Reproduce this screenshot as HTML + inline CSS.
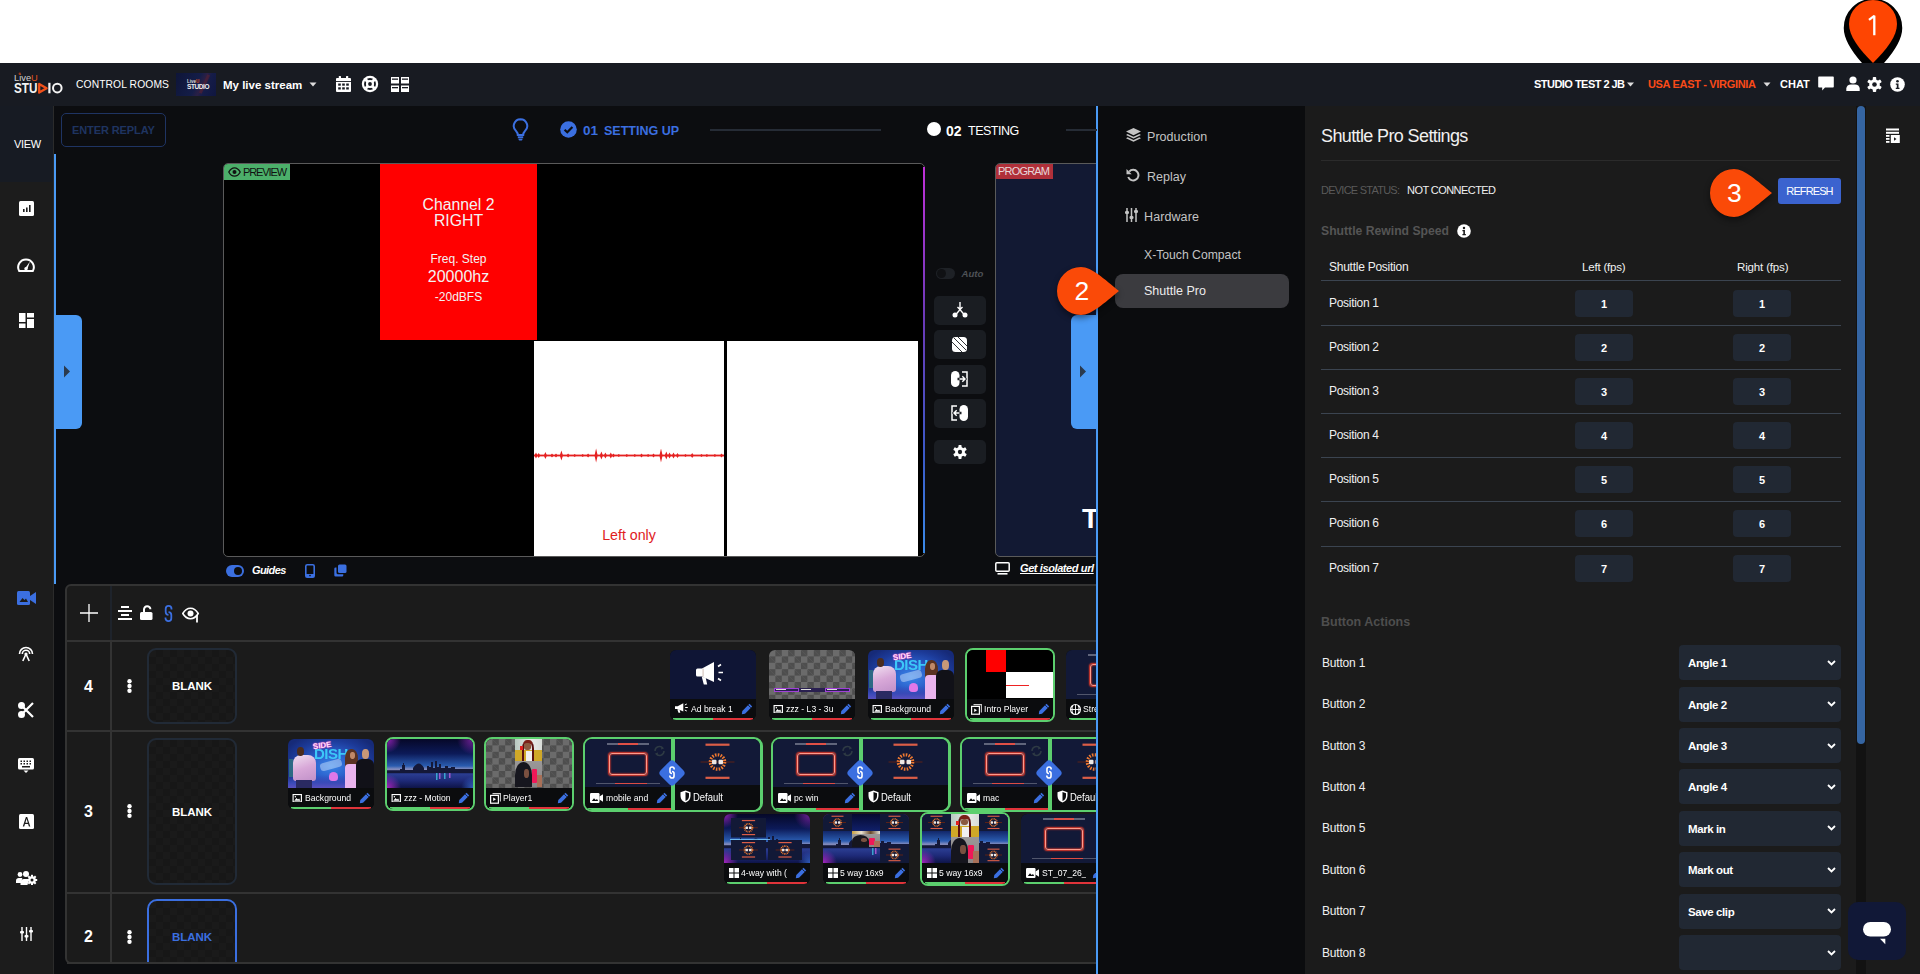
<!DOCTYPE html>
<html><head><meta charset="utf-8">
<style>
*{margin:0;padding:0;box-sizing:border-box}
html,body{width:1920px;height:974px;overflow:hidden;background:#fff;font-family:"Liberation Sans",sans-serif}
.a{position:absolute}
.t{position:absolute;white-space:nowrap;line-height:1}
#topbar{left:0;top:63px;width:1920px;height:43px;background:#181b22}
#side{left:0;top:106px;width:54px;height:868px;background:#1c1c1c;border-right:1px solid #2b2b2b}
#sideview{left:0;top:106px;width:53px;height:76px;background:#171b23}
#main{left:54px;top:106px;width:1043px;height:868px;background:#0c0d10}
#bluel{left:54px;top:154px;width:2px;height:430px;background:#4a9af5}
#bluer{left:1096px;top:106px;width:2px;height:868px;background:#4a9af5}
#snav{left:1098px;top:106px;width:207px;height:868px;background:#0b0c0e}
#scont{left:1305px;top:106px;width:615px;height:868px;background:#1b1b1b}
#tl{left:65px;top:584px;width:1100px;height:380px;background:#1b1b1b;border:2px solid #333;border-radius:6px}
</style></head><body>
<div id="topbar" class="a"></div>
<div id="side" class="a"></div>
<div id="sideview" class="a"></div>
<div id="main" class="a"></div>
<div id="tl" class="a"></div>

<div class="a" style="left:0;top:0;width:1096px;height:962px;overflow:hidden">
<!-- TIMELINE STRUCTURE -->
<div class="a" style="left:67px;top:640px;width:1040px;height:2px;background:#333"></div>
<div class="a" style="left:67px;top:730px;width:1040px;height:2px;background:#333"></div>
<div class="a" style="left:67px;top:892px;width:1040px;height:2px;background:#333"></div>
<div class="a" style="left:110px;top:586px;width:2px;height:54px;background:#1e232b"></div>
<div class="a" style="left:110px;top:642px;width:2px;height:320px;background:#333"></div>
<svg class="a" style="left:80px;top:604px" width="18" height="18" viewBox="0 0 18 18"><path d="M9 0V18M0 9H18" stroke="#fff" stroke-width="1.3"/></svg>
<svg class="a" style="left:118px;top:606px" width="14" height="14" viewBox="0 0 14 14"><g fill="#fff"><rect x="3" y="0" width="8" height="2"/><rect x="0" y="4" width="14" height="2"/><rect x="3" y="8" width="8" height="2"/><rect x="0" y="12" width="14" height="2"/></g></svg>
<svg class="a" style="left:140px;top:605px" width="15" height="15" viewBox="0 0 15 15"><path d="M4 7V4.5A3.2 3.2 0 0 1 10.4 4.3" fill="none" stroke="#fff" stroke-width="2"/><rect x="0" y="7" width="12.5" height="8" rx="1.5" fill="#fff"/></svg>
<svg class="a" style="left:163px;top:605px" width="11" height="17" viewBox="0 0 11 17"><g fill="none" stroke="#3b6fe0" stroke-width="1.8"><path d="M8.5 4.5V3.8A2.9 2.9 0 0 0 2.7 3.8V7A2.9 2.9 0 0 0 5.5 9.8"/><path d="M2.5 12.5V13.2A2.9 2.9 0 0 0 8.3 13.2V10A2.9 2.9 0 0 0 5.5 7.2"/></g></svg>
<svg class="a" style="left:182px;top:607px" width="18" height="16" viewBox="0 0 18 16"><path d="M0.8 6.5C2.8 3 5.5 1.3 8.5 1.3S14.2 3 16.2 6.5C14.2 10 11.5 11.7 8.5 11.7S2.8 10 0.8 6.5z" fill="none" stroke="#fff" stroke-width="1.6"/><circle cx="8.5" cy="6.5" r="3" fill="#fff"/><path d="M15 8V15.5" stroke="#fff" stroke-width="1.8"/></svg>
<div class="t" style="left:84px;top:678.5px;font-size:16px;font-weight:bold;color:#fff">4</div>
<div class="t" style="left:84px;top:804px;font-size:16px;font-weight:bold;color:#fff">3</div>
<div class="t" style="left:84px;top:928.8px;font-size:16px;font-weight:bold;color:#fff">2</div>
<svg class="a" style="left:126px;top:678px" width="7" height="16" viewBox="0 0 7 16"><g fill="#fff"><circle cx="3.5" cy="3.3" r="2.2"/><circle cx="3.5" cy="8" r="2.2"/><circle cx="3.5" cy="12.7" r="2.2"/></g></svg>
<svg class="a" style="left:126px;top:803px" width="7" height="16" viewBox="0 0 7 16"><g fill="#fff"><circle cx="3.5" cy="3.3" r="2.2"/><circle cx="3.5" cy="8" r="2.2"/><circle cx="3.5" cy="12.7" r="2.2"/></g></svg>
<svg class="a" style="left:126px;top:929px" width="7" height="16" viewBox="0 0 7 16"><g fill="#fff"><circle cx="3.5" cy="3.3" r="2.2"/><circle cx="3.5" cy="8" r="2.2"/><circle cx="3.5" cy="12.7" r="2.2"/></g></svg>

<div class="a" style="left:147px;top:648px;width:90px;height:76px;border:2px solid #212a36;border-radius:9px;background-color:#1a1a1a;background-image:linear-gradient(45deg,#171717 25%,transparent 25%,transparent 75%,#171717 75%),linear-gradient(45deg,#171717 25%,transparent 25%,transparent 75%,#171717 75%);background-size:14px 14px;background-position:0 0,7px 7px"></div>
<div class="t" style="left:147px;top:680.8px;width:90px;text-align:center;font-size:11.5px;font-weight:bold;color:#fff">BLANK</div>
<div class="a" style="left:147px;top:738px;width:90px;height:147px;border:2px solid #212a36;border-radius:9px;background-color:#1a1a1a;background-image:linear-gradient(45deg,#171717 25%,transparent 25%,transparent 75%,#171717 75%),linear-gradient(45deg,#171717 25%,transparent 25%,transparent 75%,#171717 75%);background-size:14px 14px;background-position:0 0,7px 7px"></div>
<div class="t" style="left:147px;top:806.8px;width:90px;text-align:center;font-size:11.5px;font-weight:bold;color:#fff">BLANK</div>
<div class="a" style="left:147px;top:899px;width:90px;height:80px;border:2px solid #3b6fe0;border-radius:10px;background-color:#1a1a1a;background-image:linear-gradient(45deg,#171717 25%,transparent 25%,transparent 75%,#171717 75%),linear-gradient(45deg,#171717 25%,transparent 25%,transparent 75%,#171717 75%);background-size:14px 14px;background-position:0 0,7px 7px"></div>
<div class="t" style="left:147px;top:931.5px;width:90px;text-align:center;font-size:11.5px;font-weight:bold;color:#3b6fe0">BLANK</div>
<!-- CARDS -->
<div class="a" style="left:670px;top:650px;width:86px;height:70px"><div class="a" style="left:0;top:0;width:86px;height:70px;border-radius:6px;overflow:hidden;background:#0b0c0e"><div class="a" style="left:0;top:0;width:86px;height:49px;background:#0f1535"></div><svg class="a" style="left:26px;top:11.5px" width="31" height="23" viewBox="0 0 31 23"><path d="M0 8Q0 6.5 1.5 6.5H6L18 0V20L6 14.5H1.5Q0 14.5 0 13z" fill="#fff"/><rect x="6.5" y="6.5" width="1.2" height="8" fill="#d8c8c0"/><path d="M5.8 15L7.8 22.5H11.2L9.6 15.3z" fill="#fff"/><path d="M22 4.5L25 2.5M22.5 10.5H27M22 16.5L25 18.5" stroke="#fff" stroke-width="1.6"/></svg><div class="a" style="left:0;top:49px;width:86px;height:21px;background:#0b0c0e"><svg class="a" style="left:5px;top:4px" width="13" height="10" viewBox="0 0 13 10"><path d="M0 3.2H2.6L8.3 0.3V8.6L2.6 6H0z" fill="#fff"/><path d="M2.3 6.2L3.5 9.8H5.3L4.5 6.3z" fill="#fff"/><path d="M9.8 2L11.8 1M10.2 4.5H12.8M9.8 7L11.8 8" stroke="#fff" stroke-width="1"/></svg><div class="a" style="left:21px;top:4.3px;width:43.5px;height:13px;overflow:hidden"><div class="t" style="left:0;top:0;font-size:9.8px;color:#fff;letter-spacing:0px;line-height:12px;transform:scaleX(0.88);transform-origin:left">Ad break 1</div></div><svg class="a" style="left:71px;top:3.5px" width="12" height="12" viewBox="0 0 12 12"><path d="M8.5 0.8L11.2 3.5L4 10.7L0.8 11.2L1.3 8z" fill="#3b6fe0"/><path d="M7.2 2.1L9.9 4.8" stroke="#0b0c0e" stroke-width="0.8"/></svg></div><div class="a" style="left:3px;top:68px;width:40.0px;height:2px;background:#5ccf6e"></div><div class="a" style="left:43.0px;top:68px;width:40.0px;height:2px;background:#e0343a"></div></div></div>
<div class="a" style="left:769px;top:650px;width:86px;height:70px"><div class="a" style="left:0;top:0;width:86px;height:70px;border-radius:6px;overflow:hidden;background:#0b0c0e"><div class="a" style="left:0;top:0;width:86px;height:49px;background-color:#6b6b6b;background-image:linear-gradient(45deg,#4e4e4e 25%,transparent 25%,transparent 75%,#4e4e4e 75%),linear-gradient(45deg,#4e4e4e 25%,transparent 25%,transparent 75%,#4e4e4e 75%);background-size:12.8px 12.8px;background-position:0 0,6.4px 6.4px;"></div><div class="a" style="left:5px;top:38px;width:25px;height:4px;border:1px solid #a040d8;background:#2a2050"></div><div class="a" style="left:30px;top:38px;width:26px;height:4px;background:#2a2050"></div><div class="a" style="left:56px;top:38px;width:25px;height:4px;border:1px solid #a040d8;background:#2a2050"></div><div class="a" style="left:7px;top:39px;width:10px;height:1.2px;background:#ddd"></div><div class="a" style="left:32px;top:39px;width:10px;height:1.2px;background:#ddd"></div><div class="a" style="left:58px;top:39px;width:10px;height:1.2px;background:#ddd"></div><div class="a" style="left:0;top:49px;width:86px;height:21px;background:#0b0c0e"><svg class="a" style="left:4px;top:5.5px" width="10.5" height="8.5" viewBox="0 0 10 9"><rect x="0.6" y="0.6" width="8.8" height="7.8" fill="none" stroke="#fff" stroke-width="1.2"/><path d="M1.8 7.2L4.2 4.3L5.8 5.8L7 4.8L8.3 7.2z" fill="#fff"/><circle cx="3" cy="2.8" r="0.8" fill="#fff"/></svg><div class="a" style="left:16.5px;top:4.3px;width:48.0px;height:13px;overflow:hidden"><div class="t" style="left:0;top:0;font-size:9.8px;color:#fff;letter-spacing:0px;line-height:12px;transform:scaleX(0.88);transform-origin:left">zzz - L3 - 3u</div></div><svg class="a" style="left:71px;top:3.5px" width="12" height="12" viewBox="0 0 12 12"><path d="M8.5 0.8L11.2 3.5L4 10.7L0.8 11.2L1.3 8z" fill="#3b6fe0"/><path d="M7.2 2.1L9.9 4.8" stroke="#0b0c0e" stroke-width="0.8"/></svg></div><div class="a" style="left:3px;top:68px;width:40.0px;height:2px;background:#5ccf6e"></div><div class="a" style="left:43.0px;top:68px;width:40.0px;height:2px;background:#e0343a"></div></div></div>
<div class="a" style="left:868px;top:650px;width:86px;height:70px"><div class="a" style="left:0;top:0;width:86px;height:70px;border-radius:6px;overflow:hidden;background:#0b0c0e"><div class="a" style="left:0;top:0;width:86px;height:49px;background:radial-gradient(ellipse 60% 70% at 50% 55%,#3a86e8 0%,#2a5cc8 40%,#1c3a98 75%,#162a78 100%)"></div><div class="a" style="left:0;top:36px;width:86px;height:13px;background:linear-gradient(180deg,rgba(40,60,160,0),#3a4ab8 60%,#5a50c0)"></div><div class="t" style="left:26px;top:7px;font-size:15px;font-weight:bold;color:#3cc8f8;letter-spacing:-0.5px;transform:scaleY(0.95)">DISH</div><div class="t" style="left:25px;top:2.5px;font-size:8px;font-weight:bold;color:#fce0fc;text-shadow:0 0 1.5px #f040c0,0 0 1px #f040c0;transform:rotate(-8deg)">SIDE</div><div class="a" style="left:32px;top:22px;width:22px;height:8px;background:#d8e8ff;opacity:0.45;border-radius:3px;transform:rotate(-15deg)"></div><div class="a" style="left:41px;top:33px;width:9px;height:9px;background:#e078e8;border-radius:50% 50% 35% 35%"></div><div class="a" style="left:1px;top:20px;width:4px;height:18px;background:#3a8a7a;opacity:0.6"></div><div class="a" style="left:4.5px;top:15.5px;width:23px;height:26px;background:linear-gradient(160deg,#f0e0f0,#d8a8d8 50%,#c090c8);border-radius:8px 8px 3px 3px"></div><div class="a" style="left:8.5px;top:8px;width:7.5px;height:9px;background:#4a2c1e;border-radius:45%"></div><div class="a" style="left:8px;top:41px;width:16px;height:8px;background:#2a2a62"></div><div class="a" style="left:57px;top:10px;width:13px;height:20px;background:#5a3222;border-radius:45% 45% 20% 20%"></div><div class="a" style="left:61.5px;top:13px;width:5px;height:7px;background:#c08868;border-radius:45%"></div><div class="a" style="left:56.5px;top:25px;width:14px;height:24px;background:#eab4ee;border-radius:4px 4px 0 0"></div><div class="a" style="left:73.5px;top:10px;width:7px;height:10px;background:#c89878;border-radius:45%"></div><div class="a" style="left:68px;top:20px;width:18px;height:29px;background:#111118;border-radius:6px 6px 0 0"></div><div class="a" style="left:0;top:49px;width:86px;height:21px;background:#0b0c0e"><svg class="a" style="left:4px;top:5.5px" width="10.5" height="8.5" viewBox="0 0 10 9"><rect x="0.6" y="0.6" width="8.8" height="7.8" fill="none" stroke="#fff" stroke-width="1.2"/><path d="M1.8 7.2L4.2 4.3L5.8 5.8L7 4.8L8.3 7.2z" fill="#fff"/><circle cx="3" cy="2.8" r="0.8" fill="#fff"/></svg><div class="a" style="left:16.5px;top:4.3px;width:48.0px;height:13px;overflow:hidden"><div class="t" style="left:0;top:0;font-size:9.8px;color:#fff;letter-spacing:0px;line-height:12px;transform:scaleX(0.88);transform-origin:left">Background</div></div><svg class="a" style="left:71px;top:3.5px" width="12" height="12" viewBox="0 0 12 12"><path d="M8.5 0.8L11.2 3.5L4 10.7L0.8 11.2L1.3 8z" fill="#3b6fe0"/><path d="M7.2 2.1L9.9 4.8" stroke="#0b0c0e" stroke-width="0.8"/></svg></div><div class="a" style="left:3px;top:68px;width:40.0px;height:2px;background:#5ccf6e"></div><div class="a" style="left:43.0px;top:68px;width:40.0px;height:2px;background:#e0343a"></div></div></div>
<div class="a" style="left:965px;top:648px;width:90px;height:74px;border:2px solid #5ccf6e;border-radius:8px;background:#5ccf6e"></div><div class="a" style="left:967px;top:650px;width:86px;height:70px"><div class="a" style="left:0;top:0;width:86px;height:70px;border-radius:6px;overflow:hidden;background:#0b0c0e"><div class="a" style="left:0;top:0;width:86px;height:49px;background:#000"></div><div class="a" style="left:19px;top:0;width:20px;height:21.5px;background:#f00"></div><div class="a" style="left:38.5px;top:21.5px;width:23px;height:26.5px;background:#fff"></div><div class="a" style="left:62px;top:21.5px;width:23.5px;height:26.5px;background:#fff"></div><div class="a" style="left:38.5px;top:34.5px;width:23px;height:0.6px;background:#e22"></div><div class="a" style="left:0;top:49px;width:86px;height:21px;background:#0b0c0e"><svg class="a" style="left:4px;top:5px" width="11" height="11" viewBox="0 0 11 11"><path d="M2.5 0.6H10.4V8.5" fill="none" stroke="#ccc" stroke-width="1.1"/><rect x="0.6" y="2.4" width="7.8" height="7.8" fill="none" stroke="#fff" stroke-width="1.2"/><path d="M3.2 4.5L6 6.3L3.2 8.1z" fill="#fff"/></svg><div class="a" style="left:17px;top:4.3px;width:47.5px;height:13px;overflow:hidden"><div class="t" style="left:0;top:0;font-size:9.8px;color:#fff;letter-spacing:0px;line-height:12px;transform:scaleX(0.88);transform-origin:left">Intro Player</div></div><svg class="a" style="left:71px;top:3.5px" width="12" height="12" viewBox="0 0 12 12"><path d="M8.5 0.8L11.2 3.5L4 10.7L0.8 11.2L1.3 8z" fill="#3b6fe0"/><path d="M7.2 2.1L9.9 4.8" stroke="#0b0c0e" stroke-width="0.8"/></svg></div><div class="a" style="left:3px;top:68px;width:40.0px;height:2px;background:#5ccf6e"></div><div class="a" style="left:43.0px;top:68px;width:40.0px;height:2px;background:#e0343a"></div></div></div>
<div class="a" style="left:1066px;top:650px;width:86px;height:70px"><div class="a" style="left:0;top:0;width:86px;height:70px;border-radius:6px;overflow:hidden;background:#0b0c0e"><div class="a" style="left:0;top:0;width:86px;height:49px;background:#121937"></div><div class="a" style="left:22.0px;top:4.3px;width:42px;height:2px;background:#d8d8e0;opacity:0.4"></div><div class="a" style="left:33.0px;top:4.3px;width:20px;height:2px;background:#ff4a3a;opacity:0.8"></div><div class="a" style="left:24px;top:13.5px;width:38px;height:22px;border:1.3px solid #ff9a8a;border-radius:3px;box-shadow:0 0 1.5px 0.5px #e03a2a, inset 0 0 1.5px 0.5px #e03a2a"></div><div class="a" style="left:11.0px;top:43.7px;width:64px;height:1.6px;background:#c8c8d0;opacity:0.35"></div><div class="a" style="left:30.0px;top:43.7px;width:32px;height:1.6px;background:#ff4a3a;opacity:0.8"></div><div class="a" style="left:0;top:49px;width:86px;height:21px;background:#0b0c0e"><svg class="a" style="left:4px;top:5px" width="11" height="11" viewBox="0 0 12 12"><circle cx="6" cy="6" r="5.4" fill="none" stroke="#fff" stroke-width="1.2"/><path d="M0.6 6H11.4M6 0.6V11.4M3 1.8C2 4 2 8 3 10.2M9 1.8C10 4 10 8 9 10.2" fill="none" stroke="#fff" stroke-width="1"/></svg><div class="a" style="left:17px;top:4.3px;width:47.5px;height:13px;overflow:hidden"><div class="t" style="left:0;top:0;font-size:9.8px;color:#fff;letter-spacing:0px;line-height:12px;transform:scaleX(0.88);transform-origin:left">Stream</div></div><svg class="a" style="left:71px;top:3.5px" width="12" height="12" viewBox="0 0 12 12"><path d="M8.5 0.8L11.2 3.5L4 10.7L0.8 11.2L1.3 8z" fill="#3b6fe0"/><path d="M7.2 2.1L9.9 4.8" stroke="#0b0c0e" stroke-width="0.8"/></svg></div><div class="a" style="left:3px;top:68px;width:40.0px;height:2px;background:#5ccf6e"></div><div class="a" style="left:43.0px;top:68px;width:40.0px;height:2px;background:#e0343a"></div></div></div>
<div class="a" style="left:288px;top:739px;width:86px;height:70px"><div class="a" style="left:0;top:0;width:86px;height:70px;border-radius:6px;overflow:hidden;background:#0b0c0e"><div class="a" style="left:0;top:0;width:86px;height:49px;background:radial-gradient(ellipse 60% 70% at 50% 55%,#3a86e8 0%,#2a5cc8 40%,#1c3a98 75%,#162a78 100%)"></div><div class="a" style="left:0;top:36px;width:86px;height:13px;background:linear-gradient(180deg,rgba(40,60,160,0),#3a4ab8 60%,#5a50c0)"></div><div class="t" style="left:26px;top:7px;font-size:15px;font-weight:bold;color:#3cc8f8;letter-spacing:-0.5px;transform:scaleY(0.95)">DISH</div><div class="t" style="left:25px;top:2.5px;font-size:8px;font-weight:bold;color:#fce0fc;text-shadow:0 0 1.5px #f040c0,0 0 1px #f040c0;transform:rotate(-8deg)">SIDE</div><div class="a" style="left:32px;top:22px;width:22px;height:8px;background:#d8e8ff;opacity:0.45;border-radius:3px;transform:rotate(-15deg)"></div><div class="a" style="left:41px;top:33px;width:9px;height:9px;background:#e078e8;border-radius:50% 50% 35% 35%"></div><div class="a" style="left:1px;top:20px;width:4px;height:18px;background:#3a8a7a;opacity:0.6"></div><div class="a" style="left:4.5px;top:15.5px;width:23px;height:26px;background:linear-gradient(160deg,#f0e0f0,#d8a8d8 50%,#c090c8);border-radius:8px 8px 3px 3px"></div><div class="a" style="left:8.5px;top:8px;width:7.5px;height:9px;background:#4a2c1e;border-radius:45%"></div><div class="a" style="left:8px;top:41px;width:16px;height:8px;background:#2a2a62"></div><div class="a" style="left:57px;top:10px;width:13px;height:20px;background:#5a3222;border-radius:45% 45% 20% 20%"></div><div class="a" style="left:61.5px;top:13px;width:5px;height:7px;background:#c08868;border-radius:45%"></div><div class="a" style="left:56.5px;top:25px;width:14px;height:24px;background:#eab4ee;border-radius:4px 4px 0 0"></div><div class="a" style="left:73.5px;top:10px;width:7px;height:10px;background:#c89878;border-radius:45%"></div><div class="a" style="left:68px;top:20px;width:18px;height:29px;background:#111118;border-radius:6px 6px 0 0"></div><div class="a" style="left:0;top:49px;width:86px;height:21px;background:#0b0c0e"><svg class="a" style="left:4px;top:5.5px" width="10.5" height="8.5" viewBox="0 0 10 9"><rect x="0.6" y="0.6" width="8.8" height="7.8" fill="none" stroke="#fff" stroke-width="1.2"/><path d="M1.8 7.2L4.2 4.3L5.8 5.8L7 4.8L8.3 7.2z" fill="#fff"/><circle cx="3" cy="2.8" r="0.8" fill="#fff"/></svg><div class="a" style="left:16.5px;top:4.3px;width:48.0px;height:13px;overflow:hidden"><div class="t" style="left:0;top:0;font-size:9.8px;color:#fff;letter-spacing:0px;line-height:12px;transform:scaleX(0.88);transform-origin:left">Background</div></div><svg class="a" style="left:71px;top:3.5px" width="12" height="12" viewBox="0 0 12 12"><path d="M8.5 0.8L11.2 3.5L4 10.7L0.8 11.2L1.3 8z" fill="#3b6fe0"/><path d="M7.2 2.1L9.9 4.8" stroke="#0b0c0e" stroke-width="0.8"/></svg></div><div class="a" style="left:3px;top:68px;width:40.0px;height:2px;background:#5ccf6e"></div><div class="a" style="left:43.0px;top:68px;width:40.0px;height:2px;background:#e0343a"></div></div></div>
<div class="a" style="left:385px;top:737px;width:90px;height:74px;border:2px solid #5ccf6e;border-radius:8px;background:#5ccf6e"></div><div class="a" style="left:387px;top:739px;width:86px;height:70px"><div class="a" style="left:0;top:0;width:86px;height:70px;border-radius:6px;overflow:hidden;background:#0b0c0e"><div class="a" style="left:0;top:0;width:86px;height:49px;background:radial-gradient(circle at 0% 0%,rgba(170,40,210,0.85) 0,rgba(120,30,170,0) 14px),radial-gradient(circle at 100% 0%,rgba(150,40,190,0.75) 0,rgba(120,30,170,0) 16px),radial-gradient(circle at 0% 100%,rgba(190,40,210,0.85) 0,rgba(120,30,170,0) 14px),radial-gradient(circle at 100% 100%,rgba(60,120,230,0.7) 0,rgba(40,80,200,0) 12px),linear-gradient(180deg,#060828 0%,#0c1a58 30%,#2a5cb0 55%,#8a90c0 62%,#141c48 66%,#2a3c90 72%,#1e2a78 85%,#0e1448 100%);"></div><svg class="a" style="left:0;top:0" width="86" height="48" viewBox="0 0 86 48"><path d="M0 31.5H13V30H15V26H16V24H17V26H18V31H26V29Q32 20 37 29V31H40V27H42V28H44V23H46V29H48V22H50V28H52V25H54V29H58V27H61V29H64V28H68V30H86V34H0z" fill="#141838"/><g fill="#c060e0" opacity="0.8"><rect x="52" y="34" width="1.5" height="6"/><rect x="62" y="34" width="1.5" height="5"/></g><g fill="#40c0e0" opacity="0.8"><rect x="49" y="34" width="1.5" height="7"/><rect x="57" y="34" width="1.5" height="6"/></g></svg><div class="a" style="left:0;top:49px;width:86px;height:21px;background:#0b0c0e"><svg class="a" style="left:4px;top:5.5px" width="10.5" height="8.5" viewBox="0 0 10 9"><rect x="0.6" y="0.6" width="8.8" height="7.8" fill="none" stroke="#fff" stroke-width="1.2"/><path d="M1.8 7.2L4.2 4.3L5.8 5.8L7 4.8L8.3 7.2z" fill="#fff"/><circle cx="3" cy="2.8" r="0.8" fill="#fff"/></svg><div class="a" style="left:16.5px;top:4.3px;width:48.0px;height:13px;overflow:hidden"><div class="t" style="left:0;top:0;font-size:9.8px;color:#fff;letter-spacing:0px;line-height:12px;transform:scaleX(0.88);transform-origin:left">zzz - Motion</div></div><svg class="a" style="left:71px;top:3.5px" width="12" height="12" viewBox="0 0 12 12"><path d="M8.5 0.8L11.2 3.5L4 10.7L0.8 11.2L1.3 8z" fill="#3b6fe0"/><path d="M7.2 2.1L9.9 4.8" stroke="#0b0c0e" stroke-width="0.8"/></svg></div><div class="a" style="left:3px;top:68px;width:40.0px;height:2px;background:#5ccf6e"></div><div class="a" style="left:43.0px;top:68px;width:40.0px;height:2px;background:#e0343a"></div></div></div>
<div class="a" style="left:484px;top:737px;width:90px;height:74px;border:2px solid #5ccf6e;border-radius:8px;background:#5ccf6e"></div><div class="a" style="left:486px;top:739px;width:86px;height:70px"><div class="a" style="left:0;top:0;width:86px;height:70px;border-radius:6px;overflow:hidden;background:#0b0c0e"><div class="a" style="left:0;top:0;width:86px;height:49px;background-color:#6b6b6b;background-image:linear-gradient(45deg,#4e4e4e 25%,transparent 25%,transparent 75%,#4e4e4e 75%),linear-gradient(45deg,#4e4e4e 25%,transparent 25%,transparent 75%,#4e4e4e 75%);background-size:12.8px 12.8px;background-position:0 0,6.4px 6.4px;"></div><div class="a" style="left:29px;top:0px;width:27px;height:22px;overflow:hidden;background:linear-gradient(90deg,#b8c8c0,#e8ecea 60%,#d8dcd8)"><div class="a" style="left:0;top:11.0px;width:27px;height:11.0px;background:#d0a828"></div><div class="a" style="left:10.8px;top:12.1px;width:6.8px;height:9.9px;background:#f0f0f0"></div><div class="a" style="left:6.8px;top:1.1px;width:12.2px;height:20.9px;border-left:2.5px solid #5a1010;border-right:2.5px solid #5a1010;border-top:4px solid #7a2018;border-radius:40% 40% 0 0"></div><div class="a" style="left:9.4px;top:4.4px;width:6.8px;height:6.6px;background:#8a5a40;border-radius:40%"></div><div class="a" style="left:4.9px;top:6.6px;width:3px;height:4px;background:#e02020"></div></div><div class="a" style="left:29px;top:22px;width:27px;height:26px;overflow:hidden;background:linear-gradient(180deg,#9a9898,#8a8686)"><div class="a" style="left:0;top:1.3px;width:16.7px;height:26.0px;background:#16161e;border-radius:50% 50% 0 0"></div><div class="a" style="left:8.9px;top:7.8px;width:5.4px;height:9.1px;background:#7a5040;border-radius:40%"></div><div class="a" style="left:16.7px;top:7.8px;width:5.4px;height:14.3px;background:#f01858;border-radius:1px"></div><div class="a" style="left:21.6px;top:14.3px;width:5.4px;height:11.7px;background:#a87058"></div></div><div class="a" style="left:0;top:49px;width:86px;height:21px;background:#0b0c0e"><svg class="a" style="left:4px;top:5px" width="11" height="11" viewBox="0 0 11 11"><path d="M2.5 0.6H10.4V8.5" fill="none" stroke="#ccc" stroke-width="1.1"/><rect x="0.6" y="2.4" width="7.8" height="7.8" fill="none" stroke="#fff" stroke-width="1.2"/><path d="M3.2 4.5L6 6.3L3.2 8.1z" fill="#fff"/></svg><div class="a" style="left:17px;top:4.3px;width:47.5px;height:13px;overflow:hidden"><div class="t" style="left:0;top:0;font-size:9.8px;color:#fff;letter-spacing:0px;line-height:12px;transform:scaleX(0.88);transform-origin:left">Player1</div></div><svg class="a" style="left:71px;top:3.5px" width="12" height="12" viewBox="0 0 12 12"><path d="M8.5 0.8L11.2 3.5L4 10.7L0.8 11.2L1.3 8z" fill="#3b6fe0"/><path d="M7.2 2.1L9.9 4.8" stroke="#0b0c0e" stroke-width="0.8"/></svg></div><div class="a" style="left:3px;top:68px;width:40.0px;height:2px;background:#5ccf6e"></div><div class="a" style="left:43.0px;top:68px;width:40.0px;height:2px;background:#e0343a"></div></div></div>
<div class="a" style="left:583px;top:737px;width:180px;height:75px;background:#5ccf6e;border-radius:9px"></div><div class="a" style="left:585px;top:739px;width:86px;height:71px;border-radius:7px 0 0 7px;overflow:hidden;background:#0b0c0e"><div class="a" style="left:0;top:0;width:86px;height:48px;overflow:hidden"><div class="a" style="left:0;top:0;width:86px;height:48px;background:#121937"></div><div class="a" style="left:22.0px;top:4.3px;width:42px;height:2px;background:#d8d8e0;opacity:0.4"></div><div class="a" style="left:33.0px;top:4.3px;width:20px;height:2px;background:#ff4a3a;opacity:0.8"></div><div class="a" style="left:24px;top:13.5px;width:38px;height:22px;border:1.3px solid #ff9a8a;border-radius:3px;box-shadow:0 0 1.5px 0.5px #e03a2a, inset 0 0 1.5px 0.5px #e03a2a"></div><div class="a" style="left:11.0px;top:43.7px;width:64px;height:1.6px;background:#c8c8d0;opacity:0.35"></div><div class="a" style="left:30.0px;top:43.7px;width:32px;height:1.6px;background:#ff4a3a;opacity:0.8"></div></div><svg class="a" style="left:68px;top:6px" width="13" height="12" viewBox="0 0 13 12"><path d="M2 6A4.5 4.5 0 0 1 10 3.2M11 6A4.5 4.5 0 0 1 3 8.8" fill="none" stroke="#2e3a44" stroke-width="1.5"/><path d="M8.5 1.5L11 3.5L8 4.5zM4.5 10.5L2 8.5L5 7.5z" fill="#2e3a44"/></svg><div class="a" style="left:0;top:49px;width:86px;height:21px;background:#0b0c0e"><svg class="a" style="left:5px;top:5px" width="13" height="10" viewBox="0 0 13 10"><rect x="0" y="0" width="9.5" height="10" rx="1.2" fill="#fff"/><path d="M9.5 3.5L13 1.2V8.8L9.5 6.5z" fill="#fff"/><path d="M1.8 8L4 5.3L5.7 7L7 6L8.2 8z" fill="#0b0c0e"/></svg><div class="a" style="left:20.5px;top:4.3px;width:44.0px;height:13px;overflow:hidden"><div class="t" style="left:0;top:0;font-size:9.8px;color:#fff;letter-spacing:0px;line-height:12px;transform:scaleX(0.88);transform-origin:left">mobile and</div></div><svg class="a" style="left:71px;top:3.5px" width="12" height="12" viewBox="0 0 12 12"><path d="M8.5 0.8L11.2 3.5L4 10.7L0.8 11.2L1.3 8z" fill="#3b6fe0"/><path d="M7.2 2.1L9.9 4.8" stroke="#0b0c0e" stroke-width="0.8"/></svg></div><div class="a" style="left:0;top:69px;width:43px;height:2px;background:#5ccf6e"></div><div class="a" style="left:43px;top:69px;width:43px;height:2px;background:#e0343a"></div></div><div class="a" style="left:675px;top:739px;width:85px;height:71px;border-radius:0 7px 7px 0;overflow:hidden;background:#0b0c0e"><div class="a" style="left:0;top:0;width:85px;height:46px;overflow:hidden"><svg class="a" style="left:0px;top:0px" width="85" height="46" viewBox="0 0 85 46"><rect width="85" height="46" fill="#121937"/><rect x="30.50" y="4.60" width="24.00" height="2.20" fill="#ff6a4a" opacity="0.85"/><rect x="25.50" y="22.50" width="34.00" height="1" fill="#5a2218"/><circle cx="42.50" cy="23.00" r="7.20" fill="none" stroke="#f07a30" stroke-width="3.20" stroke-dasharray="1.56 1.27"/><rect x="37.00" y="20.70" width="4.50" height="4.60" rx="1.00" fill="#ece8e4"/><rect x="43.50" y="20.70" width="4.50" height="4.60" rx="1.00" fill="#ece8e4"/><rect x="30.50" y="37.72" width="24.00" height="2.20" fill="#ff6a4a" opacity="0.85"/></svg></div><div class="a" style="left:0;top:46px;width:85px;height:25px;background:#0b0c0e"><svg class="a" style="left:5px;top:5px" width="11" height="13" viewBox="0 0 11 13"><path d="M5.5 0.5L10.5 2.3V6C10.5 9.3 8.3 11.6 5.5 12.5C2.7 11.6 0.5 9.3 0.5 6V2.3z" fill="#fff"/><path d="M5.5 2L9 3.3V6C9 8.5 7.5 10.3 5.5 11z" fill="#0b0c0e"/></svg><div class="t" style="left:18px;top:7px;font-size:10.5px;color:#fff;letter-spacing:0px;transform:scaleX(0.9);transform-origin:left">Default</div></div></div><div class="a" style="left:662px;top:763px;width:20px;height:20px;background:#3b6fe0;border-radius:4px;transform:rotate(45deg)"></div><svg class="a" style="left:668px;top:765px" width="8" height="15" viewBox="0 0 11 17"><g fill="none" stroke="#fff" stroke-width="2.2"><path d="M8.5 4.5V3.8A2.9 2.9 0 0 0 2.7 3.8V7A2.9 2.9 0 0 0 5.5 9.8"/><path d="M2.5 12.5V13.2A2.9 2.9 0 0 0 8.3 13.2V10A2.9 2.9 0 0 0 5.5 7.2"/></g></svg>
<div class="a" style="left:771px;top:737px;width:180px;height:75px;background:#5ccf6e;border-radius:9px"></div><div class="a" style="left:773px;top:739px;width:86px;height:71px;border-radius:7px 0 0 7px;overflow:hidden;background:#0b0c0e"><div class="a" style="left:0;top:0;width:86px;height:48px;overflow:hidden"><div class="a" style="left:0;top:0;width:86px;height:48px;background:#121937"></div><div class="a" style="left:22.0px;top:4.3px;width:42px;height:2px;background:#d8d8e0;opacity:0.4"></div><div class="a" style="left:33.0px;top:4.3px;width:20px;height:2px;background:#ff4a3a;opacity:0.8"></div><div class="a" style="left:24px;top:13.5px;width:38px;height:22px;border:1.3px solid #ff9a8a;border-radius:3px;box-shadow:0 0 1.5px 0.5px #e03a2a, inset 0 0 1.5px 0.5px #e03a2a"></div><div class="a" style="left:11.0px;top:43.7px;width:64px;height:1.6px;background:#c8c8d0;opacity:0.35"></div><div class="a" style="left:30.0px;top:43.7px;width:32px;height:1.6px;background:#ff4a3a;opacity:0.8"></div></div><svg class="a" style="left:68px;top:6px" width="13" height="12" viewBox="0 0 13 12"><path d="M2 6A4.5 4.5 0 0 1 10 3.2M11 6A4.5 4.5 0 0 1 3 8.8" fill="none" stroke="#2e3a44" stroke-width="1.5"/><path d="M8.5 1.5L11 3.5L8 4.5zM4.5 10.5L2 8.5L5 7.5z" fill="#2e3a44"/></svg><div class="a" style="left:0;top:49px;width:86px;height:21px;background:#0b0c0e"><svg class="a" style="left:5px;top:5px" width="13" height="10" viewBox="0 0 13 10"><rect x="0" y="0" width="9.5" height="10" rx="1.2" fill="#fff"/><path d="M9.5 3.5L13 1.2V8.8L9.5 6.5z" fill="#fff"/><path d="M1.8 8L4 5.3L5.7 7L7 6L8.2 8z" fill="#0b0c0e"/></svg><div class="a" style="left:20.5px;top:4.3px;width:44.0px;height:13px;overflow:hidden"><div class="t" style="left:0;top:0;font-size:9.8px;color:#fff;letter-spacing:0px;line-height:12px;transform:scaleX(0.88);transform-origin:left">pc win</div></div><svg class="a" style="left:71px;top:3.5px" width="12" height="12" viewBox="0 0 12 12"><path d="M8.5 0.8L11.2 3.5L4 10.7L0.8 11.2L1.3 8z" fill="#3b6fe0"/><path d="M7.2 2.1L9.9 4.8" stroke="#0b0c0e" stroke-width="0.8"/></svg></div><div class="a" style="left:0;top:69px;width:43px;height:2px;background:#5ccf6e"></div><div class="a" style="left:43px;top:69px;width:43px;height:2px;background:#e0343a"></div></div><div class="a" style="left:863px;top:739px;width:85px;height:71px;border-radius:0 7px 7px 0;overflow:hidden;background:#0b0c0e"><div class="a" style="left:0;top:0;width:85px;height:46px;overflow:hidden"><svg class="a" style="left:0px;top:0px" width="85" height="46" viewBox="0 0 85 46"><rect width="85" height="46" fill="#121937"/><rect x="30.50" y="4.60" width="24.00" height="2.20" fill="#ff6a4a" opacity="0.85"/><rect x="25.50" y="22.50" width="34.00" height="1" fill="#5a2218"/><circle cx="42.50" cy="23.00" r="7.20" fill="none" stroke="#f07a30" stroke-width="3.20" stroke-dasharray="1.56 1.27"/><rect x="37.00" y="20.70" width="4.50" height="4.60" rx="1.00" fill="#ece8e4"/><rect x="43.50" y="20.70" width="4.50" height="4.60" rx="1.00" fill="#ece8e4"/><rect x="30.50" y="37.72" width="24.00" height="2.20" fill="#ff6a4a" opacity="0.85"/></svg></div><div class="a" style="left:0;top:46px;width:85px;height:25px;background:#0b0c0e"><svg class="a" style="left:5px;top:5px" width="11" height="13" viewBox="0 0 11 13"><path d="M5.5 0.5L10.5 2.3V6C10.5 9.3 8.3 11.6 5.5 12.5C2.7 11.6 0.5 9.3 0.5 6V2.3z" fill="#fff"/><path d="M5.5 2L9 3.3V6C9 8.5 7.5 10.3 5.5 11z" fill="#0b0c0e"/></svg><div class="t" style="left:18px;top:7px;font-size:10.5px;color:#fff;letter-spacing:0px;transform:scaleX(0.9);transform-origin:left">Default</div></div></div><div class="a" style="left:850px;top:763px;width:20px;height:20px;background:#3b6fe0;border-radius:4px;transform:rotate(45deg)"></div><svg class="a" style="left:856px;top:765px" width="8" height="15" viewBox="0 0 11 17"><g fill="none" stroke="#fff" stroke-width="2.2"><path d="M8.5 4.5V3.8A2.9 2.9 0 0 0 2.7 3.8V7A2.9 2.9 0 0 0 5.5 9.8"/><path d="M2.5 12.5V13.2A2.9 2.9 0 0 0 8.3 13.2V10A2.9 2.9 0 0 0 5.5 7.2"/></g></svg>
<div class="a" style="left:960px;top:737px;width:180px;height:75px;background:#5ccf6e;border-radius:9px"></div><div class="a" style="left:962px;top:739px;width:86px;height:71px;border-radius:7px 0 0 7px;overflow:hidden;background:#0b0c0e"><div class="a" style="left:0;top:0;width:86px;height:48px;overflow:hidden"><div class="a" style="left:0;top:0;width:86px;height:48px;background:#121937"></div><div class="a" style="left:22.0px;top:4.3px;width:42px;height:2px;background:#d8d8e0;opacity:0.4"></div><div class="a" style="left:33.0px;top:4.3px;width:20px;height:2px;background:#ff4a3a;opacity:0.8"></div><div class="a" style="left:24px;top:13.5px;width:38px;height:22px;border:1.3px solid #ff9a8a;border-radius:3px;box-shadow:0 0 1.5px 0.5px #e03a2a, inset 0 0 1.5px 0.5px #e03a2a"></div><div class="a" style="left:11.0px;top:43.7px;width:64px;height:1.6px;background:#c8c8d0;opacity:0.35"></div><div class="a" style="left:30.0px;top:43.7px;width:32px;height:1.6px;background:#ff4a3a;opacity:0.8"></div></div><svg class="a" style="left:68px;top:6px" width="13" height="12" viewBox="0 0 13 12"><path d="M2 6A4.5 4.5 0 0 1 10 3.2M11 6A4.5 4.5 0 0 1 3 8.8" fill="none" stroke="#2e3a44" stroke-width="1.5"/><path d="M8.5 1.5L11 3.5L8 4.5zM4.5 10.5L2 8.5L5 7.5z" fill="#2e3a44"/></svg><div class="a" style="left:0;top:49px;width:86px;height:21px;background:#0b0c0e"><svg class="a" style="left:5px;top:5px" width="13" height="10" viewBox="0 0 13 10"><rect x="0" y="0" width="9.5" height="10" rx="1.2" fill="#fff"/><path d="M9.5 3.5L13 1.2V8.8L9.5 6.5z" fill="#fff"/><path d="M1.8 8L4 5.3L5.7 7L7 6L8.2 8z" fill="#0b0c0e"/></svg><div class="a" style="left:20.5px;top:4.3px;width:44.0px;height:13px;overflow:hidden"><div class="t" style="left:0;top:0;font-size:9.8px;color:#fff;letter-spacing:0px;line-height:12px;transform:scaleX(0.88);transform-origin:left">mac</div></div><svg class="a" style="left:71px;top:3.5px" width="12" height="12" viewBox="0 0 12 12"><path d="M8.5 0.8L11.2 3.5L4 10.7L0.8 11.2L1.3 8z" fill="#3b6fe0"/><path d="M7.2 2.1L9.9 4.8" stroke="#0b0c0e" stroke-width="0.8"/></svg></div><div class="a" style="left:0;top:69px;width:43px;height:2px;background:#5ccf6e"></div><div class="a" style="left:43px;top:69px;width:43px;height:2px;background:#e0343a"></div></div><div class="a" style="left:1052px;top:739px;width:85px;height:71px;border-radius:0 7px 7px 0;overflow:hidden;background:#0b0c0e"><div class="a" style="left:0;top:0;width:85px;height:46px;overflow:hidden"><svg class="a" style="left:0px;top:0px" width="85" height="46" viewBox="0 0 85 46"><rect width="85" height="46" fill="#121937"/><rect x="30.50" y="4.60" width="24.00" height="2.20" fill="#ff6a4a" opacity="0.85"/><rect x="25.50" y="22.50" width="34.00" height="1" fill="#5a2218"/><circle cx="42.50" cy="23.00" r="7.20" fill="none" stroke="#f07a30" stroke-width="3.20" stroke-dasharray="1.56 1.27"/><rect x="37.00" y="20.70" width="4.50" height="4.60" rx="1.00" fill="#ece8e4"/><rect x="43.50" y="20.70" width="4.50" height="4.60" rx="1.00" fill="#ece8e4"/><rect x="30.50" y="37.72" width="24.00" height="2.20" fill="#ff6a4a" opacity="0.85"/></svg></div><div class="a" style="left:0;top:46px;width:85px;height:25px;background:#0b0c0e"><svg class="a" style="left:5px;top:5px" width="11" height="13" viewBox="0 0 11 13"><path d="M5.5 0.5L10.5 2.3V6C10.5 9.3 8.3 11.6 5.5 12.5C2.7 11.6 0.5 9.3 0.5 6V2.3z" fill="#fff"/><path d="M5.5 2L9 3.3V6C9 8.5 7.5 10.3 5.5 11z" fill="#0b0c0e"/></svg><div class="t" style="left:18px;top:7px;font-size:10.5px;color:#fff;letter-spacing:0px;transform:scaleX(0.9);transform-origin:left">Default</div></div></div><div class="a" style="left:1039px;top:763px;width:20px;height:20px;background:#3b6fe0;border-radius:4px;transform:rotate(45deg)"></div><svg class="a" style="left:1045px;top:765px" width="8" height="15" viewBox="0 0 11 17"><g fill="none" stroke="#fff" stroke-width="2.2"><path d="M8.5 4.5V3.8A2.9 2.9 0 0 0 2.7 3.8V7A2.9 2.9 0 0 0 5.5 9.8"/><path d="M2.5 12.5V13.2A2.9 2.9 0 0 0 8.3 13.2V10A2.9 2.9 0 0 0 5.5 7.2"/></g></svg>
<div class="a" style="left:724px;top:814px;width:86px;height:70px"><div class="a" style="left:0;top:0;width:86px;height:70px;border-radius:6px;overflow:hidden;background:#0b0c0e"><div class="a" style="left:0;top:0;width:86px;height:49px;background:radial-gradient(circle at 0% 0%,rgba(170,40,210,0.85) 0,rgba(120,30,170,0) 14px),radial-gradient(circle at 100% 0%,rgba(150,40,190,0.75) 0,rgba(120,30,170,0) 16px),radial-gradient(circle at 0% 100%,rgba(190,40,210,0.85) 0,rgba(120,30,170,0) 14px),radial-gradient(circle at 100% 100%,rgba(60,120,230,0.7) 0,rgba(40,80,200,0) 12px),linear-gradient(180deg,#060828 0%,#0c1a58 30%,#2a5cb0 55%,#8a90c0 62%,#141c48 66%,#2a3c90 72%,#1e2a78 85%,#0e1448 100%);"></div><svg class="a" style="left:0;top:0" width="86" height="48" viewBox="0 0 86 48"><path d="M0 31.5H13V30H15V26H16V24H17V26H18V31H26V29Q32 20 37 29V31H40V27H42V28H44V23H46V29H48V22H50V28H52V25H54V29H58V27H61V29H64V28H68V30H86V34H0z" fill="#141838"/><g fill="#c060e0" opacity="0.8"><rect x="52" y="34" width="1.5" height="6"/><rect x="62" y="34" width="1.5" height="5"/></g><g fill="#40c0e0" opacity="0.8"><rect x="49" y="34" width="1.5" height="7"/><rect x="57" y="34" width="1.5" height="6"/></g></svg><div class="a" style="left:6px;top:24.5px;width:40px;height:1.2px;background:#80d0ff;opacity:0.8"></div><svg class="a" style="left:7px;top:4px" width="35" height="19.5" viewBox="0 0 35 19.5"><rect width="35" height="19.5" fill="#121937"/><rect x="10.90" y="1.95" width="13.20" height="1.21" fill="#ff6a4a" opacity="0.85"/><rect x="8.15" y="9.25" width="18.70" height="1" fill="#5a2218"/><circle cx="17.50" cy="9.75" r="3.96" fill="none" stroke="#f07a30" stroke-width="1.76" stroke-dasharray="0.86 0.70"/><rect x="14.47" y="8.48" width="2.48" height="2.53" rx="0.55" fill="#ece8e4"/><rect x="18.05" y="8.48" width="2.48" height="2.53" rx="0.55" fill="#ece8e4"/><rect x="10.90" y="15.99" width="13.20" height="1.21" fill="#ff6a4a" opacity="0.85"/></svg><svg class="a" style="left:7px;top:26px" width="35" height="20" viewBox="0 0 35 20"><rect width="35" height="20" fill="#121937"/><rect x="10.90" y="2.00" width="13.20" height="1.21" fill="#ff6a4a" opacity="0.85"/><rect x="8.15" y="9.50" width="18.70" height="1" fill="#5a2218"/><circle cx="17.50" cy="10.00" r="3.96" fill="none" stroke="#f07a30" stroke-width="1.76" stroke-dasharray="0.86 0.70"/><rect x="14.47" y="8.73" width="2.48" height="2.53" rx="0.55" fill="#ece8e4"/><rect x="18.05" y="8.73" width="2.48" height="2.53" rx="0.55" fill="#ece8e4"/><rect x="10.90" y="16.40" width="13.20" height="1.21" fill="#ff6a4a" opacity="0.85"/></svg><svg class="a" style="left:44px;top:26px" width="34" height="20" viewBox="0 0 34 20"><rect width="34" height="20" fill="#121937"/><rect x="10.40" y="2.00" width="13.20" height="1.21" fill="#ff6a4a" opacity="0.85"/><rect x="7.65" y="9.50" width="18.70" height="1" fill="#5a2218"/><circle cx="17.00" cy="10.00" r="3.96" fill="none" stroke="#f07a30" stroke-width="1.76" stroke-dasharray="0.86 0.70"/><rect x="13.97" y="8.73" width="2.48" height="2.53" rx="0.55" fill="#ece8e4"/><rect x="17.55" y="8.73" width="2.48" height="2.53" rx="0.55" fill="#ece8e4"/><rect x="10.40" y="16.40" width="13.20" height="1.21" fill="#ff6a4a" opacity="0.85"/></svg><div class="a" style="left:0;top:49px;width:86px;height:21px;background:#0b0c0e"><svg class="a" style="left:5px;top:4.5px" width="10" height="10" viewBox="0 0 10 10"><g fill="#fff"><rect x="0" y="0" width="4.5" height="4.5"/><rect x="5.5" y="0" width="4.5" height="4.5"/><rect x="0" y="5.5" width="4.5" height="4.5"/><rect x="5.5" y="5.5" width="4.5" height="4.5"/></g></svg><div class="a" style="left:17px;top:4.3px;width:47.5px;height:13px;overflow:hidden"><div class="t" style="left:0;top:0;font-size:9.8px;color:#fff;letter-spacing:0px;line-height:12px;transform:scaleX(0.88);transform-origin:left">4-way with (</div></div><svg class="a" style="left:71px;top:3.5px" width="12" height="12" viewBox="0 0 12 12"><path d="M8.5 0.8L11.2 3.5L4 10.7L0.8 11.2L1.3 8z" fill="#3b6fe0"/><path d="M7.2 2.1L9.9 4.8" stroke="#0b0c0e" stroke-width="0.8"/></svg></div><div class="a" style="left:3px;top:68px;width:40.0px;height:2px;background:#5ccf6e"></div><div class="a" style="left:43.0px;top:68px;width:40.0px;height:2px;background:#e0343a"></div></div></div>
<div class="a" style="left:823px;top:814px;width:86px;height:70px"><div class="a" style="left:0;top:0;width:86px;height:70px;border-radius:6px;overflow:hidden;background:#0b0c0e"><div class="a" style="left:0;top:0;width:86px;height:49px;background:radial-gradient(circle at 0% 0%,rgba(170,40,210,0.85) 0,rgba(120,30,170,0) 14px),radial-gradient(circle at 100% 0%,rgba(150,40,190,0.75) 0,rgba(120,30,170,0) 16px),radial-gradient(circle at 0% 100%,rgba(190,40,210,0.85) 0,rgba(120,30,170,0) 14px),radial-gradient(circle at 100% 100%,rgba(60,120,230,0.7) 0,rgba(40,80,200,0) 12px),linear-gradient(180deg,#060828 0%,#0c1a58 30%,#2a5cb0 55%,#8a90c0 62%,#141c48 66%,#2a3c90 72%,#1e2a78 85%,#0e1448 100%);"></div><svg class="a" style="left:0;top:0" width="86" height="48" viewBox="0 0 86 48"><path d="M0 31.5H13V30H15V26H16V24H17V26H18V31H26V29Q32 20 37 29V31H40V27H42V28H44V23H46V29H48V22H50V28H52V25H54V29H58V27H61V29H64V28H68V30H86V34H0z" fill="#141838"/><g fill="#c060e0" opacity="0.8"><rect x="52" y="34" width="1.5" height="6"/><rect x="62" y="34" width="1.5" height="5"/></g><g fill="#40c0e0" opacity="0.8"><rect x="49" y="34" width="1.5" height="7"/><rect x="57" y="34" width="1.5" height="6"/></g></svg><svg class="a" style="left:0px;top:0px" width="29" height="17" viewBox="0 0 29 17"><rect width="29" height="17" fill="#121937"/><rect x="8.50" y="1.70" width="12.00" height="1.10" fill="#ff6a4a" opacity="0.85"/><rect x="6.00" y="8.00" width="17.00" height="1" fill="#5a2218"/><circle cx="14.50" cy="8.50" r="3.60" fill="none" stroke="#f07a30" stroke-width="1.60" stroke-dasharray="0.78 0.64"/><rect x="11.75" y="7.35" width="2.25" height="2.30" rx="0.50" fill="#ece8e4"/><rect x="15.00" y="7.35" width="2.25" height="2.30" rx="0.50" fill="#ece8e4"/><rect x="8.50" y="13.94" width="12.00" height="1.10" fill="#ff6a4a" opacity="0.85"/></svg><svg class="a" style="left:57px;top:0px" width="29" height="17" viewBox="0 0 29 17"><rect width="29" height="17" fill="#121937"/><rect x="8.50" y="1.70" width="12.00" height="1.10" fill="#ff6a4a" opacity="0.85"/><rect x="6.00" y="8.00" width="17.00" height="1" fill="#5a2218"/><circle cx="14.50" cy="8.50" r="3.60" fill="none" stroke="#f07a30" stroke-width="1.60" stroke-dasharray="0.78 0.64"/><rect x="11.75" y="7.35" width="2.25" height="2.30" rx="0.50" fill="#ece8e4"/><rect x="15.00" y="7.35" width="2.25" height="2.30" rx="0.50" fill="#ece8e4"/><rect x="8.50" y="13.94" width="12.00" height="1.10" fill="#ff6a4a" opacity="0.85"/></svg><svg class="a" style="left:57px;top:33px" width="29" height="16" viewBox="0 0 29 16"><rect width="29" height="16" fill="#121937"/><rect x="8.50" y="1.60" width="12.00" height="1.10" fill="#ff6a4a" opacity="0.85"/><rect x="6.00" y="7.50" width="17.00" height="1" fill="#5a2218"/><circle cx="14.50" cy="8.00" r="3.60" fill="none" stroke="#f07a30" stroke-width="1.60" stroke-dasharray="0.78 0.64"/><rect x="11.75" y="6.85" width="2.25" height="2.30" rx="0.50" fill="#ece8e4"/><rect x="15.00" y="6.85" width="2.25" height="2.30" rx="0.50" fill="#ece8e4"/><rect x="8.50" y="13.12" width="12.00" height="1.10" fill="#ff6a4a" opacity="0.85"/></svg><div class="a" style="left:29px;top:0;width:28px;height:17px;background:linear-gradient(180deg,#060a30,#10206a)"></div><div class="a" style="left:29px;top:17px;width:28px;height:3px;background:linear-gradient(90deg,#c8a040,#e8e0d0,#6a4a2a,#e0e0d8)"></div><div class="a" style="left:29px;top:20px;width:28px;height:13px;overflow:hidden;background:linear-gradient(180deg,#9a9898,#8a8686)"><div class="a" style="left:0;top:0.7px;width:17.4px;height:13.0px;background:#16161e;border-radius:50% 50% 0 0"></div><div class="a" style="left:9.2px;top:3.9px;width:5.6px;height:4.5px;background:#7a5040;border-radius:40%"></div><div class="a" style="left:17.4px;top:3.9px;width:5.6px;height:7.2px;background:#f01858;border-radius:1px"></div><div class="a" style="left:22.4px;top:7.2px;width:5.6px;height:5.9px;background:#a87058"></div></div><div class="a" style="left:0;top:49px;width:86px;height:21px;background:#0b0c0e"><svg class="a" style="left:5px;top:4.5px" width="10" height="10" viewBox="0 0 10 10"><g fill="#fff"><rect x="0" y="0" width="4.5" height="4.5"/><rect x="5.5" y="0" width="4.5" height="4.5"/><rect x="0" y="5.5" width="4.5" height="4.5"/><rect x="5.5" y="5.5" width="4.5" height="4.5"/></g></svg><div class="a" style="left:17px;top:4.3px;width:47.5px;height:13px;overflow:hidden"><div class="t" style="left:0;top:0;font-size:9.8px;color:#fff;letter-spacing:0px;line-height:12px;transform:scaleX(0.88);transform-origin:left">5 way 16x9</div></div><svg class="a" style="left:71px;top:3.5px" width="12" height="12" viewBox="0 0 12 12"><path d="M8.5 0.8L11.2 3.5L4 10.7L0.8 11.2L1.3 8z" fill="#3b6fe0"/><path d="M7.2 2.1L9.9 4.8" stroke="#0b0c0e" stroke-width="0.8"/></svg></div><div class="a" style="left:3px;top:68px;width:40.0px;height:2px;background:#5ccf6e"></div><div class="a" style="left:43.0px;top:68px;width:40.0px;height:2px;background:#e0343a"></div></div></div>
<div class="a" style="left:920px;top:812px;width:90px;height:74px;border:2px solid #5ccf6e;border-radius:8px;background:#5ccf6e"></div><div class="a" style="left:922px;top:814px;width:86px;height:70px"><div class="a" style="left:0;top:0;width:86px;height:70px;border-radius:6px;overflow:hidden;background:#0b0c0e"><div class="a" style="left:0;top:0;width:86px;height:49px;background:radial-gradient(circle at 0% 0%,rgba(170,40,210,0.85) 0,rgba(120,30,170,0) 14px),radial-gradient(circle at 100% 0%,rgba(150,40,190,0.75) 0,rgba(120,30,170,0) 16px),radial-gradient(circle at 0% 100%,rgba(190,40,210,0.85) 0,rgba(120,30,170,0) 14px),radial-gradient(circle at 100% 100%,rgba(60,120,230,0.7) 0,rgba(40,80,200,0) 12px),linear-gradient(180deg,#060828 0%,#0c1a58 30%,#2a5cb0 55%,#8a90c0 62%,#141c48 66%,#2a3c90 72%,#1e2a78 85%,#0e1448 100%);"></div><svg class="a" style="left:0;top:0" width="86" height="48" viewBox="0 0 86 48"><path d="M0 31.5H13V30H15V26H16V24H17V26H18V31H26V29Q32 20 37 29V31H40V27H42V28H44V23H46V29H48V22H50V28H52V25H54V29H58V27H61V29H64V28H68V30H86V34H0z" fill="#141838"/><g fill="#c060e0" opacity="0.8"><rect x="52" y="34" width="1.5" height="6"/><rect x="62" y="34" width="1.5" height="5"/></g><g fill="#40c0e0" opacity="0.8"><rect x="49" y="34" width="1.5" height="7"/><rect x="57" y="34" width="1.5" height="6"/></g></svg><svg class="a" style="left:0px;top:0px" width="29" height="17" viewBox="0 0 29 17"><rect width="29" height="17" fill="#121937"/><rect x="8.50" y="1.70" width="12.00" height="1.10" fill="#ff6a4a" opacity="0.85"/><rect x="6.00" y="8.00" width="17.00" height="1" fill="#5a2218"/><circle cx="14.50" cy="8.50" r="3.60" fill="none" stroke="#f07a30" stroke-width="1.60" stroke-dasharray="0.78 0.64"/><rect x="11.75" y="7.35" width="2.25" height="2.30" rx="0.50" fill="#ece8e4"/><rect x="15.00" y="7.35" width="2.25" height="2.30" rx="0.50" fill="#ece8e4"/><rect x="8.50" y="13.94" width="12.00" height="1.10" fill="#ff6a4a" opacity="0.85"/></svg><svg class="a" style="left:57px;top:0px" width="29" height="17" viewBox="0 0 29 17"><rect width="29" height="17" fill="#121937"/><rect x="8.50" y="1.70" width="12.00" height="1.10" fill="#ff6a4a" opacity="0.85"/><rect x="6.00" y="8.00" width="17.00" height="1" fill="#5a2218"/><circle cx="14.50" cy="8.50" r="3.60" fill="none" stroke="#f07a30" stroke-width="1.60" stroke-dasharray="0.78 0.64"/><rect x="11.75" y="7.35" width="2.25" height="2.30" rx="0.50" fill="#ece8e4"/><rect x="15.00" y="7.35" width="2.25" height="2.30" rx="0.50" fill="#ece8e4"/><rect x="8.50" y="13.94" width="12.00" height="1.10" fill="#ff6a4a" opacity="0.85"/></svg><svg class="a" style="left:57px;top:33px" width="29" height="16" viewBox="0 0 29 16"><rect width="29" height="16" fill="#121937"/><rect x="8.50" y="1.60" width="12.00" height="1.10" fill="#ff6a4a" opacity="0.85"/><rect x="6.00" y="7.50" width="17.00" height="1" fill="#5a2218"/><circle cx="14.50" cy="8.00" r="3.60" fill="none" stroke="#f07a30" stroke-width="1.60" stroke-dasharray="0.78 0.64"/><rect x="11.75" y="6.85" width="2.25" height="2.30" rx="0.50" fill="#ece8e4"/><rect x="15.00" y="6.85" width="2.25" height="2.30" rx="0.50" fill="#ece8e4"/><rect x="8.50" y="13.12" width="12.00" height="1.10" fill="#ff6a4a" opacity="0.85"/></svg><div class="a" style="left:29px;top:0px;width:28px;height:23px;overflow:hidden;background:linear-gradient(90deg,#b8c8c0,#e8ecea 60%,#d8dcd8)"><div class="a" style="left:0;top:11.5px;width:28px;height:11.5px;background:#d0a828"></div><div class="a" style="left:11.2px;top:12.7px;width:7.0px;height:10.3px;background:#f0f0f0"></div><div class="a" style="left:7.0px;top:1.2px;width:12.6px;height:21.8px;border-left:2.5px solid #5a1010;border-right:2.5px solid #5a1010;border-top:4px solid #7a2018;border-radius:40% 40% 0 0"></div><div class="a" style="left:9.8px;top:4.6px;width:7.0px;height:6.9px;background:#8a5a40;border-radius:40%"></div><div class="a" style="left:5.0px;top:6.9px;width:3px;height:4px;background:#e02020"></div></div><div class="a" style="left:29px;top:23px;width:28px;height:26px;overflow:hidden;background:linear-gradient(180deg,#9a9898,#8a8686)"><div class="a" style="left:0;top:1.3px;width:17.4px;height:26.0px;background:#16161e;border-radius:50% 50% 0 0"></div><div class="a" style="left:9.2px;top:7.8px;width:5.6px;height:9.1px;background:#7a5040;border-radius:40%"></div><div class="a" style="left:17.4px;top:7.8px;width:5.6px;height:14.3px;background:#f01858;border-radius:1px"></div><div class="a" style="left:22.4px;top:14.3px;width:5.6px;height:11.7px;background:#a87058"></div></div><div class="a" style="left:0;top:49px;width:86px;height:21px;background:#0b0c0e"><svg class="a" style="left:5px;top:4.5px" width="10" height="10" viewBox="0 0 10 10"><g fill="#fff"><rect x="0" y="0" width="4.5" height="4.5"/><rect x="5.5" y="0" width="4.5" height="4.5"/><rect x="0" y="5.5" width="4.5" height="4.5"/><rect x="5.5" y="5.5" width="4.5" height="4.5"/></g></svg><div class="a" style="left:17px;top:4.3px;width:47.5px;height:13px;overflow:hidden"><div class="t" style="left:0;top:0;font-size:9.8px;color:#fff;letter-spacing:0px;line-height:12px;transform:scaleX(0.88);transform-origin:left">5 way 16x9</div></div><svg class="a" style="left:71px;top:3.5px" width="12" height="12" viewBox="0 0 12 12"><path d="M8.5 0.8L11.2 3.5L4 10.7L0.8 11.2L1.3 8z" fill="#3b6fe0"/><path d="M7.2 2.1L9.9 4.8" stroke="#0b0c0e" stroke-width="0.8"/></svg></div><div class="a" style="left:3px;top:68px;width:40.0px;height:2px;background:#5ccf6e"></div><div class="a" style="left:43.0px;top:68px;width:40.0px;height:2px;background:#e0343a"></div></div></div>
<div class="a" style="left:1021px;top:814px;width:86px;height:70px"><div class="a" style="left:0;top:0;width:86px;height:70px;border-radius:6px;overflow:hidden;background:#0b0c0e"><div class="a" style="left:0;top:0;width:86px;height:49px;background:#121937"></div><div class="a" style="left:22.0px;top:4.3px;width:42px;height:2px;background:#d8d8e0;opacity:0.4"></div><div class="a" style="left:33.0px;top:4.3px;width:20px;height:2px;background:#ff4a3a;opacity:0.8"></div><div class="a" style="left:24px;top:13.5px;width:38px;height:22px;border:1.3px solid #ff9a8a;border-radius:3px;box-shadow:0 0 1.5px 0.5px #e03a2a, inset 0 0 1.5px 0.5px #e03a2a"></div><div class="a" style="left:11.0px;top:43.7px;width:64px;height:1.6px;background:#c8c8d0;opacity:0.35"></div><div class="a" style="left:30.0px;top:43.7px;width:32px;height:1.6px;background:#ff4a3a;opacity:0.8"></div><div class="a" style="left:0;top:49px;width:86px;height:21px;background:#0b0c0e"><svg class="a" style="left:5px;top:5px" width="13" height="10" viewBox="0 0 13 10"><rect x="0" y="0" width="9.5" height="10" rx="1.2" fill="#fff"/><path d="M9.5 3.5L13 1.2V8.8L9.5 6.5z" fill="#fff"/><path d="M1.8 8L4 5.3L5.7 7L7 6L8.2 8z" fill="#0b0c0e"/></svg><div class="a" style="left:20.5px;top:4.3px;width:44.0px;height:13px;overflow:hidden"><div class="t" style="left:0;top:0;font-size:9.8px;color:#fff;letter-spacing:0px;line-height:12px;transform:scaleX(0.88);transform-origin:left">ST_07_26_u</div></div><svg class="a" style="left:71px;top:3.5px" width="12" height="12" viewBox="0 0 12 12"><path d="M8.5 0.8L11.2 3.5L4 10.7L0.8 11.2L1.3 8z" fill="#3b6fe0"/><path d="M7.2 2.1L9.9 4.8" stroke="#0b0c0e" stroke-width="0.8"/></svg></div><div class="a" style="left:3px;top:68px;width:40.0px;height:2px;background:#5ccf6e"></div><div class="a" style="left:43.0px;top:68px;width:40.0px;height:2px;background:#e0343a"></div></div></div>
</div>
<div class="a" style="left:67px;top:962px;width:1029px;height:2px;background:#333"></div>
<div id="bluel" class="a"></div>

<!-- PREVIEW -->
<div class="a" style="left:223px;top:163px;width:702px;height:394px;background:#000;border:1px solid #5a5a5a;border-radius:5px;overflow:hidden"></div>
<div class="a" style="left:923px;top:167px;width:1.5px;height:386px;background:linear-gradient(180deg,#c030d8 0%,#6a3ab8 40%,#3a5ac8 75%,#3a8ae8 100%)"></div>
<div class="a" style="left:224px;top:164px;width:66px;height:16px;background:#4caf6a;border-radius:4px 0 0 0"></div>
<svg class="a" style="left:228px;top:167px" width="13" height="10" viewBox="0 0 13 10"><path d="M0.8 5C2.5 1.8 4.3 0.8 6.5 0.8S10.5 1.8 12.2 5C10.5 8.2 8.7 9.2 6.5 9.2S2.5 8.2 0.8 5z" fill="none" stroke="#111" stroke-width="1.3"/><circle cx="6.5" cy="5" r="2" fill="#111"/></svg>
<div class="t" style="left:243px;top:167px;font-size:11px;color:#111;letter-spacing:-1.1px">PREVIEW</div>
<div class="a" style="left:380px;top:164px;width:157px;height:176px;background:#ff0000"></div>
<div class="t" style="left:380px;top:196.5px;width:157px;text-align:center;font-size:15.8px;color:#f3f3f3;line-height:16px">Channel 2<br>RIGHT</div>
<div class="t" style="left:380px;top:253px;width:157px;text-align:center;font-size:12px;color:#f3f3f3">Freq. Step</div>
<div class="t" style="left:380px;top:269px;width:157px;text-align:center;font-size:16px;color:#f3f3f3">20000hz</div>
<div class="t" style="left:380px;top:291px;width:157px;text-align:center;font-size:12px;color:#f3f3f3">-20dBFS</div>
<div class="a" style="left:534px;top:341px;width:190px;height:215px;background:#fff"></div>
<div class="a" style="left:727px;top:341px;width:191px;height:215px;background:#fff"></div>
<svg class="a" style="left:0;top:0" width="930" height="560"><rect x="534" y="454.6" width="190" height="1.8" fill="#e52222"/><path d="M534.4 455.5L536.0 452.5L537.6 455.5L536.0 458.5zM537.1 455.5L538.7 453.0L540.3 455.5L538.7 458.0zM543.8 455.5L545.4 452.0L547.0 455.5L545.4 459.0zM550.4 455.5L552.0 453.5L553.6 455.5L552.0 457.5zM554.4 455.5L556.0 453.5L557.6 455.5L556.0 457.5zM559.8 455.5L561.4 450.5L563.0 455.5L561.4 460.5zM566.5 455.5L568.1 453.5L569.7 455.5L568.1 457.5zM573.1 455.5L574.7 454.0L576.3 455.5L574.7 457.0zM581.1 455.5L582.7 454.0L584.3 455.5L582.7 457.0zM586.5 455.5L588.1 453.5L589.7 455.5L588.1 457.5zM594.5 455.5L596.1 448.5L597.7 455.5L596.1 462.5zM599.8 455.5L601.4 451.5L603.0 455.5L601.4 459.5zM603.8 455.5L605.4 452.5L607.0 455.5L605.4 458.5zM609.2 455.5L610.8 452.5L612.4 455.5L610.8 458.5zM611.8 455.5L613.4 453.5L615.0 455.5L613.4 457.5zM617.2 455.5L618.8 454.0L620.4 455.5L618.8 457.0zM625.2 455.5L626.8 454.0L628.4 455.5L626.8 457.0zM633.2 455.5L634.8 454.0L636.4 455.5L634.8 457.0zM639.9 455.5L641.5 453.5L643.1 455.5L641.5 457.5zM646.5 455.5L648.1 454.0L649.7 455.5L648.1 457.0zM651.9 455.5L653.5 453.5L655.1 455.5L653.5 457.5zM659.4 455.5L661.0 448.5L662.6 455.5L661.0 462.5zM664.7 455.5L666.3 451.5L667.9 455.5L666.3 459.5zM667.9 455.5L669.5 452.5L671.1 455.5L669.5 458.5zM671.9 455.5L673.5 452.5L675.1 455.5L673.5 458.5zM675.9 455.5L677.5 453.0L679.1 455.5L677.5 458.0zM683.9 455.5L685.5 454.0L687.1 455.5L685.5 457.0zM690.6 455.5L692.2 453.0L693.8 455.5L692.2 458.0zM699.9 455.5L701.5 454.0L703.1 455.5L701.5 457.0zM705.3 455.5L706.9 454.0L708.5 455.5L706.9 457.0zM713.3 455.5L714.9 454.0L716.5 455.5L714.9 457.0zM719.9 455.5L721.5 453.5L723.1 455.5L721.5 457.5z" fill="#e52222"/></svg>
<div class="t" style="left:534px;top:528px;width:190px;text-align:center;font-size:14.2px;color:#e0201c">Left only</div>
<!-- guides -->
<div class="a" style="left:226px;top:565px;width:18px;height:12px;border-radius:6px;background:#3b6fe0"></div>
<div class="a" style="left:234px;top:567px;width:8px;height:8px;border-radius:50%;background:#0c0d10"></div>
<div class="t" style="left:252px;top:565px;font-size:11px;font-weight:bold;font-style:italic;color:#fff;letter-spacing:-0.6px">Guides</div>
<svg class="a" style="left:305px;top:564px" width="10" height="14" viewBox="0 0 10 14"><rect x="0.8" y="0.8" width="8.4" height="12.4" rx="1.5" fill="none" stroke="#3b6fe0" stroke-width="1.6"/><rect x="0.8" y="10" width="8.4" height="3.2" fill="#3b6fe0"/><circle cx="5" cy="11.6" r="0.8" fill="#0c0d10"/></svg>
<svg class="a" style="left:334px;top:564px" width="13" height="13" viewBox="0 0 13 13"><rect x="4" y="0.5" width="8.5" height="8.5" rx="1.5" fill="#3b6fe0"/><path d="M2.5 3.5H1.5A1.2 1.2 0 0 0 .3 4.7V11.3A1.2 1.2 0 0 0 1.5 12.5H8.1A1.2 1.2 0 0 0 9.3 11.3V10.3H4A1.5 1.5 0 0 1 2.5 8.8z" fill="#3b6fe0"/></svg>
<!-- transitions -->
<div class="a" style="left:936px;top:268px;width:19px;height:11px;border-radius:6px;background:#1e2126"></div>
<div class="a" style="left:937px;top:269px;width:9px;height:9px;border-radius:50%;background:#101114"></div>
<div class="t" style="left:961.5px;top:268.5px;font-size:9.6px;font-weight:bold;font-style:italic;color:#4e5156">Auto</div>
<div class="a" style="left:934px;top:296px;width:52px;height:29px;background:#1a1d22;border-radius:5px"></div>
<div class="a" style="left:934px;top:330px;width:52px;height:29px;background:#1a1d22;border-radius:5px"></div>
<div class="a" style="left:934px;top:365px;width:52px;height:29px;background:#1a1d22;border-radius:5px"></div>
<div class="a" style="left:934px;top:399px;width:52px;height:29px;background:#1a1d22;border-radius:5px"></div>
<div class="a" style="left:934px;top:440px;width:52px;height:24px;background:#1a1d22;border-radius:5px"></div>
<svg class="a" style="left:952px;top:302px" width="16" height="16" viewBox="0 0 16 16"><g stroke="#fff" stroke-width="1.4" fill="none"><path d="M8 0V7M5.5 5L8 7.5L10.5 5"/><path d="M3.5 13L8 7.5L12.5 13"/></g><circle cx="3" cy="13" r="2.5" fill="#fff"/><circle cx="13" cy="13" r="2.5" fill="#fff"/></svg>
<svg class="a" style="left:952px;top:337px" width="15" height="15" viewBox="0 0 15 15"><defs><clipPath id="rc"><rect width="15" height="15" rx="3.5"/></clipPath></defs><rect width="15" height="15" rx="3.5" fill="#fff"/><g clip-path="url(#rc)" stroke="#1a1d22" stroke-width="0.9"><path d="M-1 4L10 15M2 1L14 13M5 -1L16 10"/></g></svg>
<svg class="a" style="left:951px;top:371px" width="17" height="16" viewBox="0 0 17 16"><rect x="0" y="0" width="8.5" height="16" rx="4.25" fill="#fff"/><path d="M11 1H16V15H11" fill="none" stroke="#fff" stroke-width="1.5"/><path d="M6.5 8H14M11.2 5L14.2 8L11.2 11" fill="none" stroke="#1a1d22" stroke-width="2.6"/><path d="M8.5 8H14M11.3 5.3L14 8L11.3 10.7" fill="none" stroke="#fff" stroke-width="1.4"/></svg>
<svg class="a" style="left:951px;top:405px" width="17" height="16" viewBox="0 0 17 16"><rect x="8.5" y="0" width="8.5" height="16" rx="4.25" fill="#fff"/><path d="M6 1H1V15H6" fill="none" stroke="#fff" stroke-width="1.5"/><path d="M10.5 8H3M5.8 5L2.8 8L5.8 11" fill="none" stroke="#1a1d22" stroke-width="2.6"/><path d="M8.5 8H3M5.7 5.3L3 8L5.7 10.7" fill="none" stroke="#fff" stroke-width="1.4"/></svg>
<svg class="a" style="left:953px;top:445px" width="14" height="14" viewBox="0 0 15 15"><g fill="#fff"><circle cx="7.5" cy="7.5" r="5.3"/><rect x="5.8" y="0" width="3.4" height="15" rx="0.8"/><rect x="5.8" y="0" width="3.4" height="15" rx="0.8" transform="rotate(60 7.5 7.5)"/><rect x="5.8" y="0" width="3.4" height="15" rx="0.8" transform="rotate(120 7.5 7.5)"/></g><circle cx="7.5" cy="7.5" r="2.3" fill="#1a1d22"/></svg>
<!-- PROGRAM -->
<div class="a" style="left:995px;top:163px;width:140px;height:394px;background:#121933;border:1px solid #5a5a5a;border-radius:5px"></div>
<div class="a" style="left:996px;top:164px;width:57px;height:15px;background:#b0303a;border-radius:4px 0 0 0"></div>
<div class="t" style="left:998px;top:166px;font-size:11px;color:#e8d8da;letter-spacing:-0.8px">PROGRAM</div>
<div class="t" style="left:1082px;top:505px;font-size:28px;font-weight:bold;color:#fff">T</div>
<svg class="a" style="left:995px;top:562px" width="15" height="13" viewBox="0 0 15 13"><rect x="0.8" y="0.8" width="13.4" height="8.4" rx="1" fill="none" stroke="#fff" stroke-width="1.5"/><rect x="2.5" y="11" width="10" height="1.6" fill="#fff"/></svg>
<div class="t" style="left:1020px;top:563px;font-size:11px;font-weight:bold;font-style:italic;color:#fff;text-decoration:underline;letter-spacing:-0.4px">Get isolated url</div>
<!-- right collapse tab -->
<div class="a" style="left:1071px;top:315px;width:27px;height:114px;background:#4a9af5;border-radius:6px 0 0 6px"></div>
<svg class="a" style="left:1079px;top:365px" width="8" height="13" viewBox="0 0 8 13"><path d="M1 0.5L7 6.5L1 12.5z" fill="#2a3a4e"/></svg>
<div id="snav" class="a"></div>
<div id="scont" class="a"></div>
<div id="bluer" class="a"></div>

<!-- TOPBAR CONTENT -->
<svg class="a" style="left:13px;top:72px" width="52" height="23" viewBox="0 0 52 23"><g transform="translate(1,9) scale(0.95,1)"><text x="0" y="0" font-family="Liberation Sans" font-size="9.8" fill="#d4d4d4">Live<tspan fill="#e0501c">U</tspan></text></g><circle cx="6.8" cy="1.8" r="1.2" fill="#a03a1a"/><g transform="translate(1,21.3) scale(0.8,1)"><text x="0" y="0" font-family="Liberation Sans" font-weight="bold" font-size="14.7" fill="#f4f4f4">STU</text></g><path d="M26.2 12L33.6 16.3L26.2 20.6z" fill="none" stroke="#f0501a" stroke-width="2.3" stroke-linejoin="round"/><rect x="35.3" y="10.8" width="2.2" height="10.5" fill="#f4f4f4"/><ellipse cx="44.3" cy="16.05" rx="4.3" ry="4.4" fill="none" stroke="#f4f4f4" stroke-width="2"/></svg>
<div class="t" style="left:76px;top:79.8px;font-size:10.3px;color:#fff;letter-spacing:0.1px">CONTROL ROOMS</div>
<div class="a" style="left:176px;top:73px;width:40px;height:23px;background:linear-gradient(115deg,#0e1538 0%,#141d48 50%,#2a1f45 62%,#151c48 72%,#0f1640 100%)"></div>
<div class="a" style="left:203px;top:74px;width:3px;height:20px;background:#5a2030;opacity:0.6;transform:rotate(25deg)"></div>
<div class="t" style="left:187px;top:80px;font-size:4.5px;color:#ddd;font-weight:bold">Live<span style="color:#e0501c">U</span></div>
<div class="t" style="left:187px;top:84px;font-size:6.5px;color:#eee;font-weight:bold;letter-spacing:-0.4px">STUDIO</div>
<div class="t" style="left:223px;top:79.8px;font-size:11.5px;font-weight:bold;color:#fff">My live stream</div>
<svg class="a" style="left:309px;top:82px" width="8" height="5" viewBox="0 0 8 5"><path d="M0.5 0.5h7L4 4.5z" fill="#ddd"/></svg>
<!-- calendar -->
<svg class="a" style="left:336px;top:76px" width="15" height="16" viewBox="0 0 15 16"><rect x="2.8" y="0" width="2.2" height="3" rx="0.5" fill="#fff"/><rect x="10" y="0" width="2.2" height="3" rx="0.5" fill="#fff"/><rect x="0" y="2" width="15" height="14" rx="1" fill="#fff"/><rect x="0" y="5" width="15" height="0.9" fill="#181b22"/><g fill="#181b22"><rect x="2.2" y="7.5" width="2.6" height="2.2"/><rect x="6.2" y="7.5" width="2.6" height="2.2"/><rect x="10.2" y="7.5" width="2.6" height="2.2"/><rect x="2.2" y="11.3" width="2.6" height="2.2"/><rect x="6.2" y="11.3" width="2.6" height="2.2"/><rect x="10.2" y="11.3" width="2.6" height="2.2"/></g></svg>
<!-- lifebuoy -->
<svg class="a" style="left:361px;top:75px" width="18" height="18" viewBox="0 0 18 18"><circle cx="9" cy="9" r="8.2" fill="#fff"/><circle cx="9" cy="9" r="5" fill="none" stroke="#181b22" stroke-width="1.9"/><g stroke="#fff" stroke-width="3"><path d="M4.5 4.5L13.5 13.5M13.5 4.5L4.5 13.5"/></g><circle cx="9" cy="9" r="3.2" fill="#fff"/><circle cx="9" cy="9" r="1.9" fill="#181b22"/></svg>
<!-- grid -->
<svg class="a" style="left:391px;top:77px" width="18" height="15" viewBox="0 0 18 15"><g fill="#fff"><rect x="0" y="0" width="8" height="6.5"/><rect x="10" y="0" width="8" height="6.5"/><rect x="0" y="8.5" width="8" height="6.5"/><rect x="10" y="8.5" width="8" height="6.5"/></g><g fill="#181b22"><rect x="1" y="1.5" width="6" height="1.3"/><rect x="11" y="1.5" width="6" height="1.3"/><rect x="1" y="10" width="6" height="1.3"/><rect x="11" y="10" width="6" height="1.3"/></g></svg>
<!-- right -->
<div class="t" style="left:1534px;top:79px;font-size:11px;font-weight:bold;color:#fff;letter-spacing:-0.53px">STUDIO TEST 2 JB</div>
<svg class="a" style="left:1627px;top:82px" width="7" height="5" viewBox="0 0 7 5"><path d="M0 0.5h7L3.5 4.5z" fill="#ddd"/></svg>
<div class="t" style="left:1648px;top:79px;font-size:11px;font-weight:bold;color:#fa4a18;letter-spacing:-0.33px">USA EAST - VIRGINIA</div>
<svg class="a" style="left:1763px;top:82px" width="8" height="5" viewBox="0 0 8 5"><path d="M0.5 0.5h7L4 4.5z" fill="#ddd"/></svg>
<div class="t" style="left:1780px;top:79px;font-size:11px;font-weight:bold;color:#fff">CHAT</div>
<svg class="a" style="left:1818px;top:76px" width="16" height="15" viewBox="0 0 16 15"><path d="M1 0.5h14a0.8 0.8 0 0 1 .8.8v9.5a0.8 0.8 0 0 1-.8.8H7L4.2 14.5V11.6H1a0.8 0.8 0 0 1-.8-.8V1.3A0.8 0.8 0 0 1 1 0.5z" fill="#fff"/></svg>
<svg class="a" style="left:1846px;top:76px" width="14" height="15" viewBox="0 0 14 15"><circle cx="7" cy="4" r="3.6" fill="#fff"/><path d="M0.3 15v-2.5C0.3 10 2.5 8.4 5 8.4h4c2.5 0 4.7 1.6 4.7 4.1V15z" fill="#fff"/></svg>
<svg class="a" style="left:1867px;top:76.5px" width="15" height="15" viewBox="0 0 15 15"><g fill="#fff"><circle cx="7.5" cy="7.5" r="5.3"/><rect x="5.8" y="0" width="3.4" height="15" rx="0.8"/><rect x="5.8" y="0" width="3.4" height="15" rx="0.8" transform="rotate(60 7.5 7.5)"/><rect x="5.8" y="0" width="3.4" height="15" rx="0.8" transform="rotate(120 7.5 7.5)"/></g><circle cx="7.5" cy="7.5" r="2.3" fill="#181b22"/></svg>
<svg class="a" style="left:1890px;top:77px" width="15" height="15" viewBox="0 0 15 15"><circle cx="7.5" cy="7.5" r="7.3" fill="#fff"/><circle cx="7.5" cy="4.2" r="1.3" fill="#181b22"/><path d="M5.8 6.4h2.7v4.3h1v1.4H5.8v-1.4h1v-2.9h-1z" fill="#181b22"/></svg>
<!-- callout 1 -->
<svg class="a" style="left:1835px;top:0px" width="75" height="63" viewBox="1835 0 75 63"><g transform="translate(0,4)"><path d="M1849 24 A24 24 0 0 1 1897 24 C1897 36, 1887 49, 1873 63 C1859 49, 1849 36, 1849 24 Z" fill="#000" stroke="#000" stroke-width="10.5" stroke-linejoin="round"/></g><path d="M1849 24 A24 24 0 0 1 1897 24 C1897 36, 1887 49, 1873 63 C1859 49, 1849 36, 1849 24 Z" fill="#fe4502"/><path d="M1869 19.8L1874.3 15.8V35.2" fill="none" stroke="#fff" stroke-width="2.3" stroke-linejoin="bevel"/></svg>
<!-- SIDEBAR -->
<div class="t" style="left:14px;top:139px;font-size:11px;color:#fff;letter-spacing:-0.3px">VIEW</div>
<svg class="a" style="left:19px;top:201px" width="15" height="15" viewBox="0 0 15 15"><rect x="0" y="0" width="15" height="15" rx="1.5" fill="#fff"/><rect x="4" y="8" width="1.6" height="3" fill="#1c1c1c"/><rect x="7" y="6.5" width="1.6" height="4.5" fill="#1c1c1c"/><rect x="10" y="4" width="1.6" height="7" fill="#1c1c1c"/></svg>
<svg class="a" style="left:17px;top:257px" width="18" height="15" viewBox="0 0 18 15"><path d="M2.2 14A7.8 7.8 0 1 1 15.8 14z" fill="none" stroke="#fff" stroke-width="2"/><path d="M8 11.5L13 4.5L10.3 12.3z" fill="#fff"/><circle cx="9" cy="11.8" r="1.7" fill="#fff"/></svg>
<svg class="a" style="left:19px;top:313px" width="15" height="15" viewBox="0 0 15 15"><g fill="#fff"><rect x="0" y="0" width="6.5" height="9"/><rect x="0" y="10.5" width="6.5" height="4.5"/><rect x="8" y="0" width="7" height="4.5"/><rect x="8" y="6" width="7" height="9"/></g></svg>
<svg class="a" style="left:17px;top:591px" width="19" height="14" viewBox="0 0 19 14"><rect x="0" y="0" width="13" height="14" rx="1.5" fill="#3b6fe0"/><path d="M13 5L19 1V13L13 9z" fill="#3b6fe0"/><path d="M2.5 11L5.5 7L7.5 9L9 7.5L11 11z" fill="#1c1c1c"/></svg>
<svg class="a" style="left:18px;top:646px" width="16" height="16" viewBox="0 0 16 16"><g fill="none" stroke="#fff" stroke-width="1.6"><path d="M1.5 8A6.5 6.5 0 0 1 14.5 8"/><path d="M4.3 8A3.7 3.7 0 0 1 11.7 8"/><path d="M8 8L4.8 15M8 8L11.2 15"/></g><circle cx="8" cy="8" r="1.6" fill="#fff"/></svg>
<svg class="a" style="left:18px;top:702px" width="16" height="16" viewBox="0 0 16 16"><g fill="none" stroke="#fff" stroke-width="2"><circle cx="3.5" cy="3.5" r="2.5"/><circle cx="3.5" cy="12.5" r="2.5"/></g><circle cx="3.5" cy="3.5" r="2.5" fill="#fff"/><circle cx="3.5" cy="12.5" r="2.5" fill="#fff"/><path d="M5 5L15 15M5 11L15 1" stroke="#fff" stroke-width="2.2"/></svg>
<svg class="a" style="left:18px;top:758px" width="16" height="16" viewBox="0 0 16 16"><rect x="0" y="0" width="16" height="11.5" rx="1.5" fill="#fff"/><g fill="#1c1c1c"><rect x="2.5" y="2.5" width="1.5" height="1.5"/><rect x="5.5" y="2.5" width="1.5" height="1.5"/><rect x="8.5" y="2.5" width="1.5" height="1.5"/><rect x="11.5" y="2.5" width="1.5" height="1.5"/><rect x="2.5" y="5" width="1.5" height="1.5"/><rect x="5.5" y="5" width="1.5" height="1.5"/><rect x="8.5" y="5" width="1.5" height="1.5"/><rect x="11.5" y="5" width="1.5" height="1.5"/><rect x="4" y="8" width="8" height="1.5"/></g><path d="M5.5 12.5h5L8 15z" fill="#fff"/></svg>
<svg class="a" style="left:19px;top:814px" width="15" height="15" viewBox="0 0 15 15"><rect x="0" y="0" width="15" height="15" rx="1.5" fill="#fff"/><path d="M3.8 12.5L6.9 3h1.3l3.1 9.5h-1.4l-.8-2.5H6l-.8 2.5zM6.4 8.8h2.4L7.6 4.8z" fill="#1c1c1c"/></svg>
<svg class="a" style="left:16px;top:871px" width="22" height="14" viewBox="0 0 22 14"><g fill="#fff"><circle cx="4" cy="3.5" r="2.4"/><path d="M0 12V9.5C0 8 1.2 7 2.7 7h3.6L5 12z"/><circle cx="10" cy="3" r="3"/><path d="M4.5 14v-2.5C4.5 9.5 6 8 8 8h5l-1.5 6z"/></g><g transform="translate(16,9)"><circle r="3.8" fill="#fff"/><g fill="#fff"><rect x="-1" y="-5.2" width="2" height="10.4"/><rect x="-5.2" y="-1" width="10.4" height="2"/><rect x="-1" y="-5.2" width="2" height="10.4" transform="rotate(45)"/><rect x="-1" y="-5.2" width="2" height="10.4" transform="rotate(-45)"/></g><circle r="1.5" fill="#1c1c1c"/></g></svg>
<svg class="a" style="left:20px;top:927px" width="13" height="14" viewBox="0 0 13 14"><g stroke="#fff" stroke-width="1.4"><path d="M2 0V14M6.5 0V14M11 0V14"/></g><g fill="#fff"><rect x="0" y="4" width="4" height="2.5" rx="1"/><rect x="4.5" y="8" width="4" height="2.5" rx="1"/><rect x="9" y="3" width="4" height="2.5" rx="1"/></g></svg>
<!-- left collapse tab -->
<div class="a" style="left:55px;top:315px;width:27px;height:114px;background:#4a9af5;border-radius:0 6px 6px 0"></div>
<svg class="a" style="left:63px;top:365px" width="8" height="13" viewBox="0 0 8 13"><path d="M1 0.5L7 6.5L1 12.5z" fill="#2a3a4e"/></svg>
<!-- ENTER REPLAY -->
<div class="a" style="left:61px;top:113px;width:105px;height:34px;border:1px solid #1f3463;border-radius:5px"></div>
<div class="t" style="left:72px;top:125px;font-size:11px;font-weight:bold;color:#1f3460;letter-spacing:-0.1px">ENTER REPLAY</div>
<!-- stepper -->
<svg class="a" style="left:512px;top:118px" width="17" height="23" viewBox="0 0 17 23"><path d="M8.5 1.2A6.8 6.8 0 0 0 4.2 13.2C5.2 14.2 5.8 15.5 5.8 17H11.2C11.2 15.5 11.8 14.2 12.8 13.2A6.8 6.8 0 0 0 8.5 1.2z" fill="none" stroke="#3b6fe0" stroke-width="2"/><rect x="5.8" y="18.3" width="5.4" height="2" fill="#3b6fe0"/><rect x="6.5" y="20.8" width="4" height="1.6" rx="0.8" fill="#3b6fe0"/></svg>
<svg class="a" style="left:560px;top:121px" width="17" height="17" viewBox="0 0 17 17"><circle cx="8.5" cy="8.5" r="8.3" fill="#3b6fe0"/><path d="M4.6 8.7L7.3 11.3L12.4 6" fill="none" stroke="#0c0d10" stroke-width="2.2"/></svg>
<div class="t" style="left:583px;top:124px;font-size:13.5px;font-weight:bold;color:#3b6fe0">01</div>
<div class="t" style="left:604px;top:125px;font-size:12.5px;font-weight:bold;color:#3b6fe0;letter-spacing:0px">SETTING UP</div>
<div class="a" style="left:710px;top:129px;width:171px;height:2px;background:#262c36"></div>
<div class="a" style="left:927px;top:122px;width:14px;height:14px;border-radius:50%;background:#fff"></div>
<div class="t" style="left:946px;top:124px;font-size:14px;font-weight:bold;color:#fff">02</div>
<div class="t" style="left:968px;top:125px;font-size:12.5px;color:#fff;letter-spacing:-0.5px">TESTING</div>
<div class="a" style="left:1066px;top:129px;width:31px;height:2px;background:#262c36"></div>

<!-- SETTINGS NAV -->
<svg class="a" style="left:1126px;top:128px" width="15" height="15" viewBox="0 0 15 15"><g fill="#c4c4c4"><path d="M7.5 0L15 3.6L7.5 7.2L0 3.6z"/><path d="M1.6 6L7.5 8.8L13.4 6L15 6.9L7.5 10.5L0 6.9z"/><path d="M1.6 9.3L7.5 12.1L13.4 9.3L15 10.2L7.5 13.8L0 10.2z"/></g></svg>
<div class="t" style="left:1147px;top:131.3px;font-size:12.5px;color:#c4c4c4;letter-spacing:0.05px">Production</div>
<svg class="a" style="left:1126px;top:168px" width="14" height="14" viewBox="0 0 14 14"><path d="M3.2 3.6A5.3 5.3 0 1 1 2.2 9" fill="none" stroke="#c4c4c4" stroke-width="2"/><path d="M0.5 1V6.2H5.7z" fill="#c4c4c4"/></svg>
<div class="t" style="left:1147px;top:170.6px;font-size:12.5px;color:#c4c4c4">Replay</div>
<svg class="a" style="left:1125px;top:208px" width="13" height="14" viewBox="0 0 13 14"><g stroke="#c4c4c4" stroke-width="1.5"><path d="M2 0V14M6.5 0V14M11 0V14"/></g><g fill="#c4c4c4"><rect x="0" y="3" width="4" height="3" rx="1.2"/><rect x="4.5" y="8" width="4" height="3" rx="1.2"/><rect x="9" y="2" width="4" height="3" rx="1.2"/></g></svg>
<div class="t" style="left:1144px;top:210.6px;font-size:12.5px;color:#c4c4c4;letter-spacing:0.1px">Hardware</div>
<div class="t" style="left:1144px;top:249.3px;font-size:12.2px;color:#c4c4c4">X-Touch Compact</div>
<div class="a" style="left:1115px;top:274px;width:174px;height:34px;background:#3b3b3f;border-radius:8px"></div>
<div class="t" style="left:1144px;top:285px;font-size:12.5px;color:#ececec">Shuttle Pro</div>
<!-- SETTINGS CONTENT -->
<div class="t" style="left:1321px;top:127px;font-size:18px;color:#f0f0f0;letter-spacing:-0.62px">Shuttle Pro Settings</div>
<div class="a" style="left:1321px;top:160px;width:519px;height:1px;background:#2b2b2b"></div>
<div class="t" style="left:1321px;top:184.6px;font-size:11px;color:#5a5a5a;letter-spacing:-0.76px">DEVICE STATUS:</div>
<div class="t" style="left:1407px;top:184.6px;font-size:11px;color:#f0f0f0;letter-spacing:-0.56px">NOT CONNECTED</div>
<div class="a" style="left:1778px;top:178px;width:63px;height:26px;background:#3b63cf;border-radius:3px"></div>
<div class="t" style="left:1778px;top:186px;width:63px;text-align:center;font-size:11px;color:#fff;letter-spacing:-0.9px">REFRESH</div>
<div class="t" style="left:1321px;top:225px;font-size:12.2px;font-weight:bold;color:#555;letter-spacing:0px">Shuttle Rewind Speed</div>
<svg class="a" style="left:1457px;top:223.5px" width="14" height="14" viewBox="0 0 15 15"><circle cx="7.5" cy="7.5" r="7.3" fill="#fff"/><circle cx="7.5" cy="4.2" r="1.3" fill="#1b1b1b"/><path d="M5.8 6.4h2.7v4.3h1v1.4H5.8v-1.4h1v-2.9h-1z" fill="#1b1b1b"/></svg>
<div class="t" style="left:1329px;top:261.2px;font-size:12px;color:#f0f0f0;letter-spacing:-0.25px">Shuttle Position</div>
<div class="t" style="left:1582px;top:261.5px;font-size:11.5px;color:#f0f0f0;letter-spacing:-0.2px">Left (fps)</div>
<div class="t" style="left:1737px;top:261.5px;font-size:11.5px;color:#f0f0f0;letter-spacing:-0.15px">Right (fps)</div>
<div class="a" style="left:1321px;top:280px;width:520px;height:1px;background:#3b4450"></div>
<div class="t" style="left:1329px;top:297px;font-size:12px;color:#f0f0f0;letter-spacing:-0.3px">Position 1</div>
<div class="a" style="left:1575px;top:290px;width:58px;height:27px;background:#212833;border-radius:4px"></div>
<div class="t" style="left:1575px;top:298.6px;width:58px;text-align:center;font-size:11px;font-weight:bold;color:#fff">1</div>
<div class="a" style="left:1733px;top:290px;width:58px;height:27px;background:#212833;border-radius:4px"></div>
<div class="t" style="left:1733px;top:298.6px;width:58px;text-align:center;font-size:11px;font-weight:bold;color:#fff">1</div>
<div class="t" style="left:1329px;top:341px;font-size:12px;color:#f0f0f0;letter-spacing:-0.3px">Position 2</div>
<div class="a" style="left:1575px;top:334px;width:58px;height:27px;background:#212833;border-radius:4px"></div>
<div class="t" style="left:1575px;top:342.6px;width:58px;text-align:center;font-size:11px;font-weight:bold;color:#fff">2</div>
<div class="a" style="left:1733px;top:334px;width:58px;height:27px;background:#212833;border-radius:4px"></div>
<div class="t" style="left:1733px;top:342.6px;width:58px;text-align:center;font-size:11px;font-weight:bold;color:#fff">2</div>
<div class="t" style="left:1329px;top:385px;font-size:12px;color:#f0f0f0;letter-spacing:-0.3px">Position 3</div>
<div class="a" style="left:1575px;top:378px;width:58px;height:27px;background:#212833;border-radius:4px"></div>
<div class="t" style="left:1575px;top:386.6px;width:58px;text-align:center;font-size:11px;font-weight:bold;color:#fff">3</div>
<div class="a" style="left:1733px;top:378px;width:58px;height:27px;background:#212833;border-radius:4px"></div>
<div class="t" style="left:1733px;top:386.6px;width:58px;text-align:center;font-size:11px;font-weight:bold;color:#fff">3</div>
<div class="t" style="left:1329px;top:429px;font-size:12px;color:#f0f0f0;letter-spacing:-0.3px">Position 4</div>
<div class="a" style="left:1575px;top:422px;width:58px;height:27px;background:#212833;border-radius:4px"></div>
<div class="t" style="left:1575px;top:430.6px;width:58px;text-align:center;font-size:11px;font-weight:bold;color:#fff">4</div>
<div class="a" style="left:1733px;top:422px;width:58px;height:27px;background:#212833;border-radius:4px"></div>
<div class="t" style="left:1733px;top:430.6px;width:58px;text-align:center;font-size:11px;font-weight:bold;color:#fff">4</div>
<div class="t" style="left:1329px;top:473px;font-size:12px;color:#f0f0f0;letter-spacing:-0.3px">Position 5</div>
<div class="a" style="left:1575px;top:466px;width:58px;height:27px;background:#212833;border-radius:4px"></div>
<div class="t" style="left:1575px;top:474.6px;width:58px;text-align:center;font-size:11px;font-weight:bold;color:#fff">5</div>
<div class="a" style="left:1733px;top:466px;width:58px;height:27px;background:#212833;border-radius:4px"></div>
<div class="t" style="left:1733px;top:474.6px;width:58px;text-align:center;font-size:11px;font-weight:bold;color:#fff">5</div>
<div class="t" style="left:1329px;top:517px;font-size:12px;color:#f0f0f0;letter-spacing:-0.3px">Position 6</div>
<div class="a" style="left:1575px;top:510px;width:58px;height:27px;background:#212833;border-radius:4px"></div>
<div class="t" style="left:1575px;top:518.6px;width:58px;text-align:center;font-size:11px;font-weight:bold;color:#fff">6</div>
<div class="a" style="left:1733px;top:510px;width:58px;height:27px;background:#212833;border-radius:4px"></div>
<div class="t" style="left:1733px;top:518.6px;width:58px;text-align:center;font-size:11px;font-weight:bold;color:#fff">6</div>
<div class="t" style="left:1329px;top:562px;font-size:12px;color:#f0f0f0;letter-spacing:-0.3px">Position 7</div>
<div class="a" style="left:1575px;top:555px;width:58px;height:27px;background:#212833;border-radius:4px"></div>
<div class="t" style="left:1575px;top:563.6px;width:58px;text-align:center;font-size:11px;font-weight:bold;color:#fff">7</div>
<div class="a" style="left:1733px;top:555px;width:58px;height:27px;background:#212833;border-radius:4px"></div>
<div class="t" style="left:1733px;top:563.6px;width:58px;text-align:center;font-size:11px;font-weight:bold;color:#fff">7</div>
<div class="a" style="left:1321px;top:325px;width:520px;height:1px;background:#3b4450"></div>
<div class="a" style="left:1321px;top:369px;width:520px;height:1px;background:#3b4450"></div>
<div class="a" style="left:1321px;top:413px;width:520px;height:1px;background:#3b4450"></div>
<div class="a" style="left:1321px;top:457px;width:520px;height:1px;background:#3b4450"></div>
<div class="a" style="left:1321px;top:501px;width:520px;height:1px;background:#3b4450"></div>
<div class="a" style="left:1321px;top:546px;width:520px;height:1px;background:#3b4450"></div>
<div class="t" style="left:1321px;top:616.3px;font-size:12.5px;font-weight:bold;color:#4e4e4e">Button Actions</div>
<div class="t" style="left:1322px;top:656.8px;font-size:12px;color:#f0f0f0;letter-spacing:-0.2px">Button 1</div>
<div class="a" style="left:1679px;top:645.2px;width:162px;height:35px;background:#212833;border-radius:4px"></div>
<div class="t" style="left:1688px;top:658.1px;font-size:11.5px;font-weight:bold;color:#fff;letter-spacing:-0.4px">Angle 1</div>
<svg class="a" style="left:1827px;top:659.7px" width="9" height="6" viewBox="0 0 9 6"><path d="M1 1L4.5 4.5L8 1" fill="none" stroke="#fff" stroke-width="1.8"/></svg>
<div class="t" style="left:1322px;top:698.2px;font-size:12px;color:#f0f0f0;letter-spacing:-0.2px">Button 2</div>
<div class="a" style="left:1679px;top:686.6px;width:162px;height:35px;background:#212833;border-radius:4px"></div>
<div class="t" style="left:1688px;top:699.5px;font-size:11.5px;font-weight:bold;color:#fff;letter-spacing:-0.4px">Angle 2</div>
<svg class="a" style="left:1827px;top:701.1px" width="9" height="6" viewBox="0 0 9 6"><path d="M1 1L4.5 4.5L8 1" fill="none" stroke="#fff" stroke-width="1.8"/></svg>
<div class="t" style="left:1322px;top:739.6px;font-size:12px;color:#f0f0f0;letter-spacing:-0.2px">Button 3</div>
<div class="a" style="left:1679px;top:728.0px;width:162px;height:35px;background:#212833;border-radius:4px"></div>
<div class="t" style="left:1688px;top:740.9px;font-size:11.5px;font-weight:bold;color:#fff;letter-spacing:-0.4px">Angle 3</div>
<svg class="a" style="left:1827px;top:742.5px" width="9" height="6" viewBox="0 0 9 6"><path d="M1 1L4.5 4.5L8 1" fill="none" stroke="#fff" stroke-width="1.8"/></svg>
<div class="t" style="left:1322px;top:781.0px;font-size:12px;color:#f0f0f0;letter-spacing:-0.2px">Button 4</div>
<div class="a" style="left:1679px;top:769.4px;width:162px;height:35px;background:#212833;border-radius:4px"></div>
<div class="t" style="left:1688px;top:782.3px;font-size:11.5px;font-weight:bold;color:#fff;letter-spacing:-0.4px">Angle 4</div>
<svg class="a" style="left:1827px;top:783.9px" width="9" height="6" viewBox="0 0 9 6"><path d="M1 1L4.5 4.5L8 1" fill="none" stroke="#fff" stroke-width="1.8"/></svg>
<div class="t" style="left:1322px;top:822.4px;font-size:12px;color:#f0f0f0;letter-spacing:-0.2px">Button 5</div>
<div class="a" style="left:1679px;top:810.8px;width:162px;height:35px;background:#212833;border-radius:4px"></div>
<div class="t" style="left:1688px;top:823.7px;font-size:11.5px;font-weight:bold;color:#fff;letter-spacing:-0.4px">Mark in</div>
<svg class="a" style="left:1827px;top:825.3px" width="9" height="6" viewBox="0 0 9 6"><path d="M1 1L4.5 4.5L8 1" fill="none" stroke="#fff" stroke-width="1.8"/></svg>
<div class="t" style="left:1322px;top:863.8px;font-size:12px;color:#f0f0f0;letter-spacing:-0.2px">Button 6</div>
<div class="a" style="left:1679px;top:852.2px;width:162px;height:35px;background:#212833;border-radius:4px"></div>
<div class="t" style="left:1688px;top:865.1px;font-size:11.5px;font-weight:bold;color:#fff;letter-spacing:-0.4px">Mark out</div>
<svg class="a" style="left:1827px;top:866.7px" width="9" height="6" viewBox="0 0 9 6"><path d="M1 1L4.5 4.5L8 1" fill="none" stroke="#fff" stroke-width="1.8"/></svg>
<div class="t" style="left:1322px;top:905.2px;font-size:12px;color:#f0f0f0;letter-spacing:-0.2px">Button 7</div>
<div class="a" style="left:1679px;top:893.6px;width:162px;height:35px;background:#212833;border-radius:4px"></div>
<div class="t" style="left:1688px;top:906.5px;font-size:11.5px;font-weight:bold;color:#fff;letter-spacing:-0.4px">Save clip</div>
<svg class="a" style="left:1827px;top:908.1px" width="9" height="6" viewBox="0 0 9 6"><path d="M1 1L4.5 4.5L8 1" fill="none" stroke="#fff" stroke-width="1.8"/></svg>
<div class="t" style="left:1322px;top:946.6px;font-size:12px;color:#f0f0f0;letter-spacing:-0.2px">Button 8</div>
<div class="a" style="left:1679px;top:935.0px;width:162px;height:35px;background:#212833;border-radius:4px"></div>
<svg class="a" style="left:1827px;top:949.5px" width="9" height="6" viewBox="0 0 9 6"><path d="M1 1L4.5 4.5L8 1" fill="none" stroke="#fff" stroke-width="1.8"/></svg>

<!-- scrollbar + right strip -->
<div class="a" style="left:1856px;top:106px;width:10px;height:868px;background:#121212"></div>
<div class="a" style="left:1857px;top:106px;width:8px;height:638px;background:#3565a2;border-radius:4px"></div>
<svg class="a" style="left:1886px;top:128px" width="14" height="15" viewBox="0 0 14 15"><g fill="#fff"><rect x="0" y="0.5" width="13" height="2"/><rect x="0" y="3.8" width="13" height="2"/><rect x="0" y="7" width="3.5" height="1.8"/><rect x="0" y="10" width="3.5" height="1.8"/><rect x="0" y="13" width="3.5" height="1.8"/><rect x="4.8" y="7" width="9" height="8"/></g><path d="M8 9.2L10.5 11L8 12.8z" fill="#1b1b1b"/></svg>
<div class="a" style="left:1848px;top:902px;width:58px;height:58px;background:#111837;border-radius:10px"></div>
<svg class="a" style="left:1862px;top:921px" width="30" height="25" viewBox="0 0 30 25"><rect x="1" y="1" width="28" height="14.5" rx="7.25" fill="#fff"/><path d="M18 17.7H23.3V23.3z" fill="#fff"/></svg>
<!-- callout 2 -->
<svg class="a" style="left:1045px;top:258px;filter:drop-shadow(0 3px 3px rgba(0,0,0,0.45))" width="82" height="66" viewBox="1045 258 82 66"><path d="M1081 267 C1092 267, 1104 279, 1119 291 C1104 303, 1092 315, 1081 315 A24 24 0 0 1 1081 267 Z" fill="#fa4a08"/></svg>
<div class="t" style="left:1074.5px;top:278px;font-size:26.5px;color:#fff">2</div>
<!-- callout 3 -->
<svg class="a" style="left:1698px;top:160px;filter:drop-shadow(0 3px 3px rgba(0,0,0,0.45))" width="82" height="66" viewBox="1698 160 82 66"><path d="M1734 169 C1745 169, 1757 181, 1772 193 C1757 205, 1745 217, 1734 217 A24 24 0 0 1 1734 169 Z" fill="#fa4a08"/></svg>
<div class="t" style="left:1727px;top:180px;font-size:26.5px;color:#fff">3</div>
</body></html>
